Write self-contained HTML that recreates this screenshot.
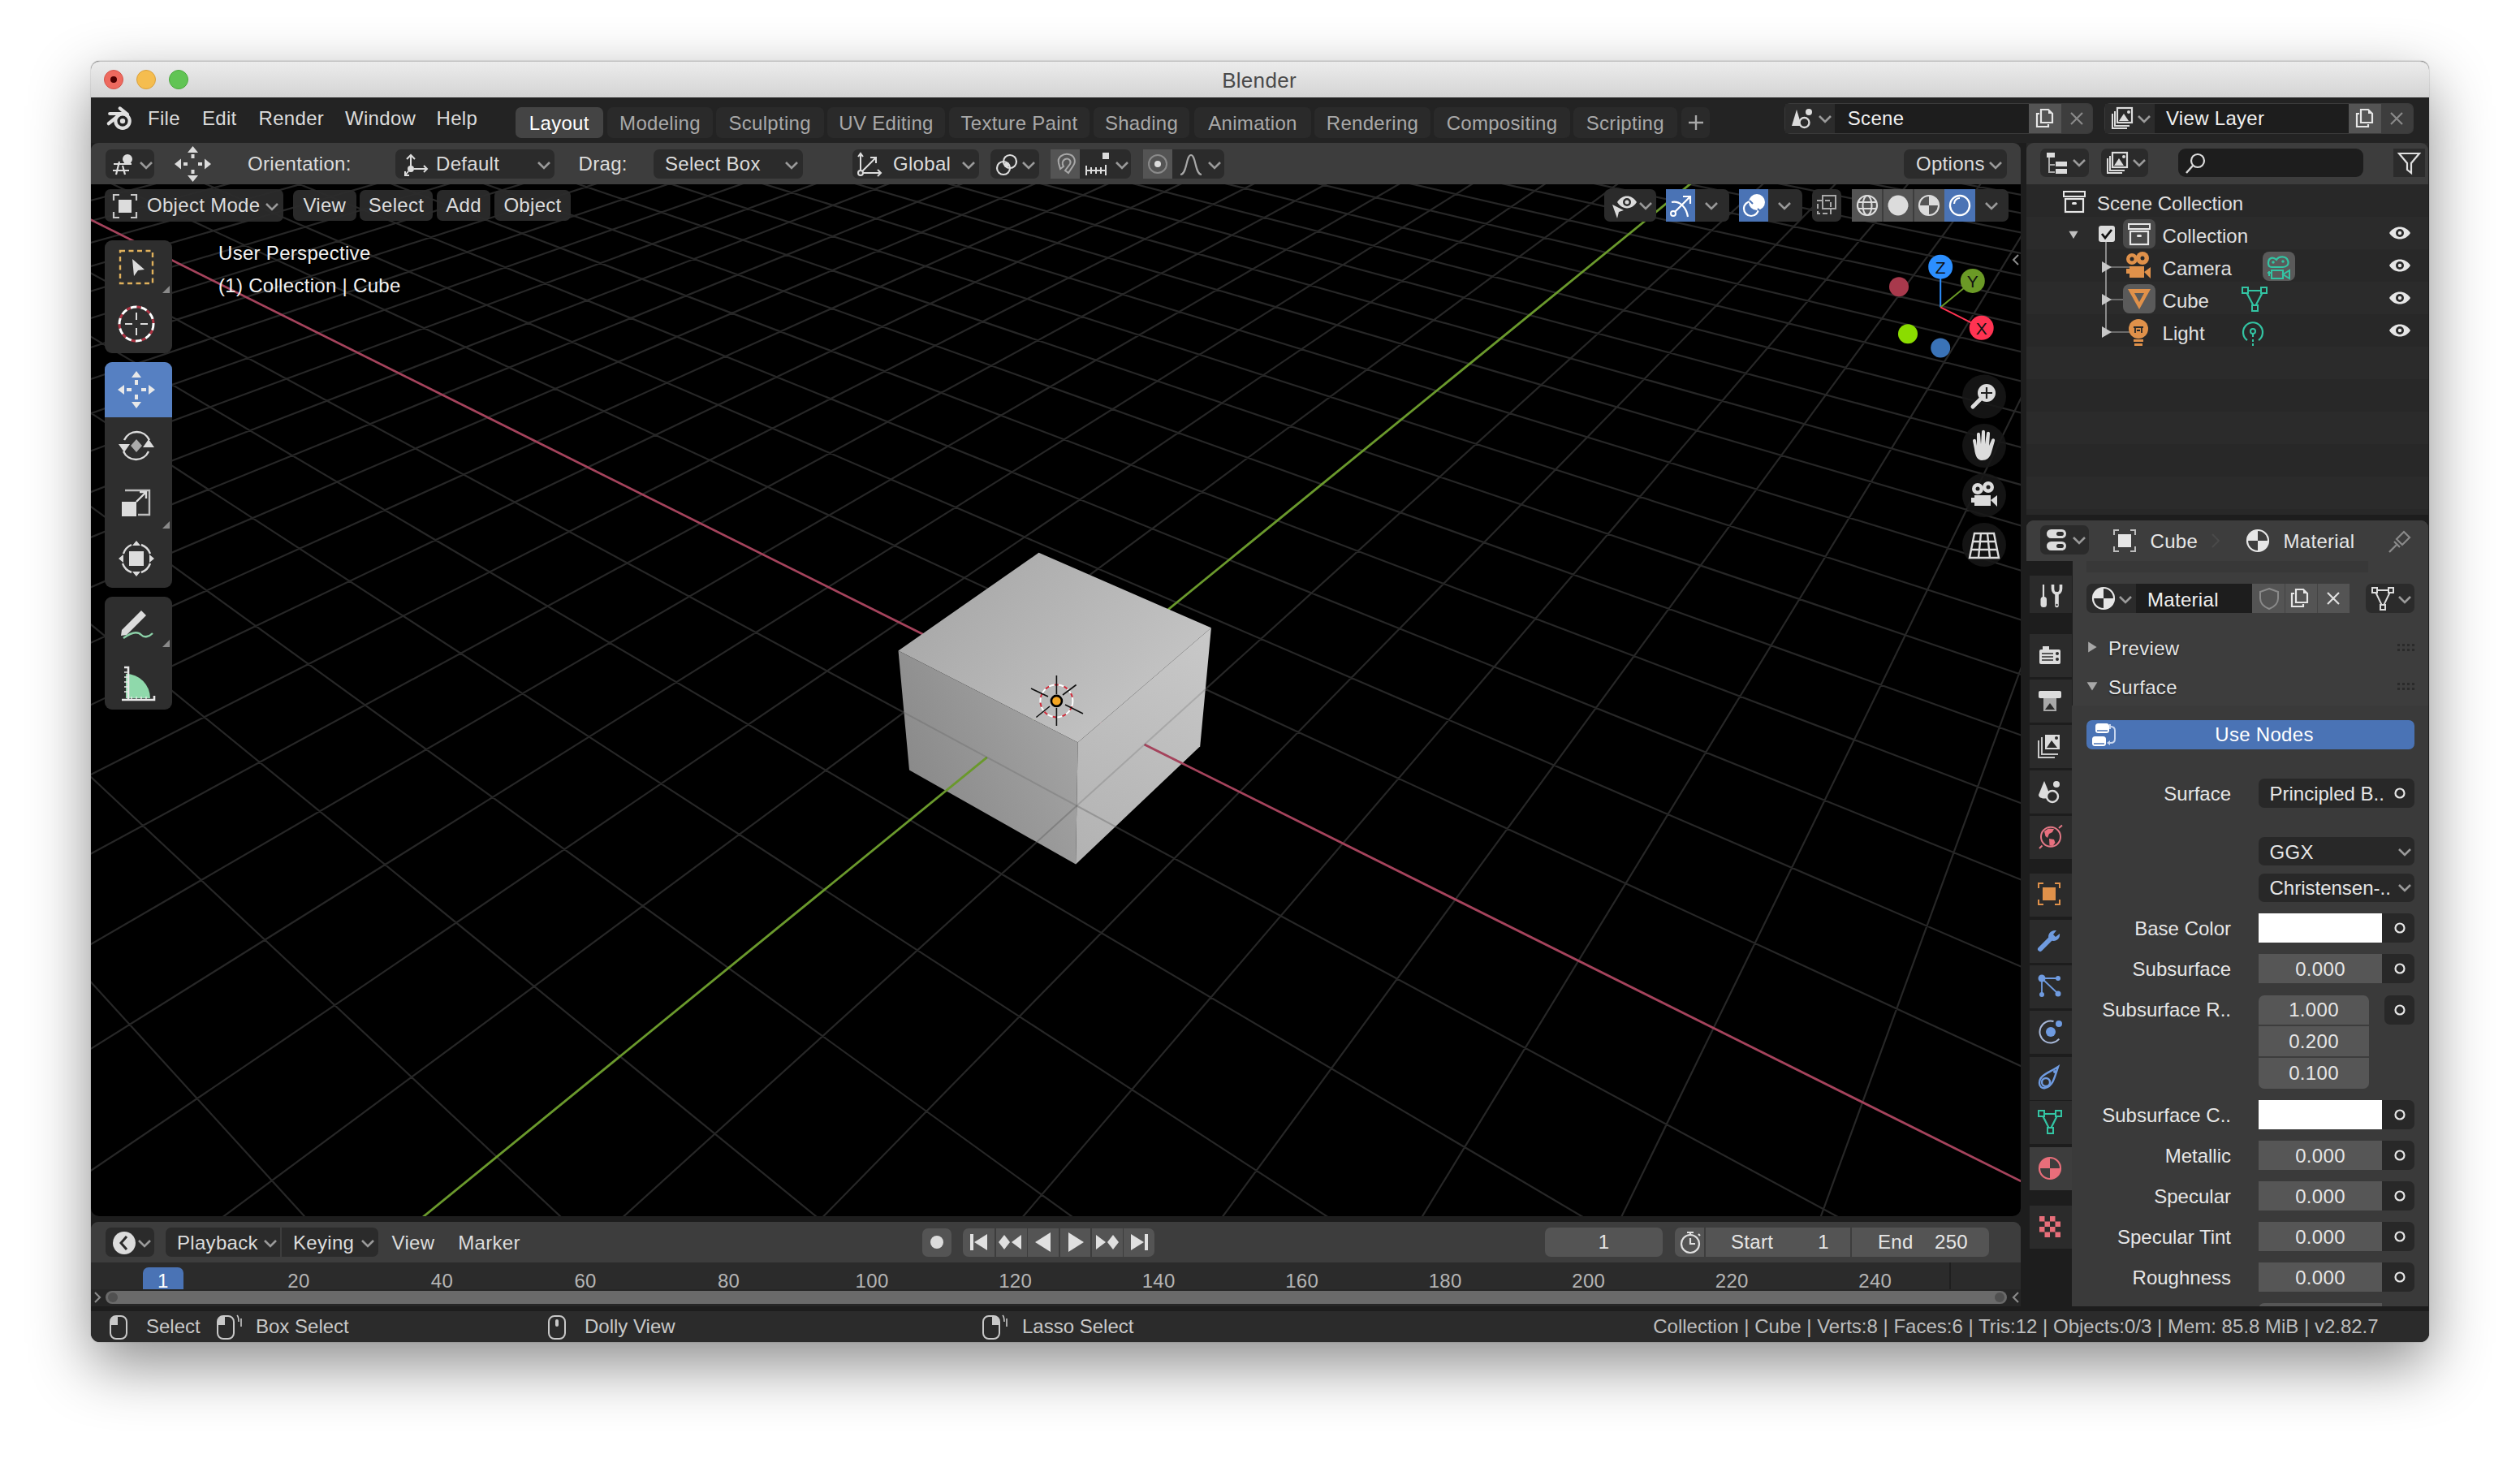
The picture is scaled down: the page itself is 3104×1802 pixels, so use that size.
<!DOCTYPE html><html><head><meta charset="utf-8"><style>
html,body{margin:0;padding:0;width:3104px;height:1802px;overflow:hidden;background:#ffffff;font-family:"Liberation Sans", sans-serif;}
div{box-sizing:border-box;}
.t{position:absolute;white-space:nowrap;letter-spacing:0.3px;}
svg{overflow:visible;}
</style></head><body>
<div style="position:absolute;left:112px;top:75px;width:2880px;height:1578px;border-radius:11px;box-shadow:0 28px 75px rgba(0,0,0,0.45), 0 0 1.5px rgba(0,0,0,0.4);background:#1d1d1d;"></div>
<div style="position:absolute;left:112px;top:75px;width:2880px;height:45px;border-radius:11px 11px 0 0;background:linear-gradient(#ececec,#d4d4d4);border-top:1px solid #bdbdbd;"></div>
<div class="t" style="left:1151.0px;width:800px;text-align:center;top:85.8px;font-size:26px;line-height:26px;color:#4a4a4a;">Blender</div>
<div style="position:absolute;left:128px;top:86px;width:24px;height:24px;border-radius:12px;background:#ee6a5f;border:1px solid #d5544a;"></div>
<div style="position:absolute;left:168px;top:86px;width:24px;height:24px;border-radius:12px;background:#f5bd4f;border:1px solid #d9a03c;"></div>
<div style="position:absolute;left:208px;top:86px;width:24px;height:24px;border-radius:12px;background:#61c454;border:1px solid #4ca93f;"></div>
<div style="position:absolute;left:136px;top:94px;width:8px;height:8px;border-radius:4px;background:#4d0000;"></div>
<div style="position:absolute;left:112.0px;top:120.0px;width:2880.0px;height:56.0px;background:#232323;"></div>
<svg style="position:absolute;left:130px;top:130px;" width="34" height="32" viewBox="0 0 34 32"><g stroke="#e0e0e0" stroke-width="4.2" stroke-linecap="round" fill="none">
<path d="M17.7 3.4L27 11"/><path d="M5.2 10H20"/><path d="M3.8 22.2L14 14"/></g>
<circle cx="21" cy="19.1" r="8.7" stroke="#e0e0e0" stroke-width="4.2" fill="#232323"/><circle cx="21" cy="19.1" r="3.2" fill="#e0e0e0"/></svg>
<div class="t" style="left:182.0px;top:134.4px;font-size:24px;line-height:24px;color:#dcdcdc;">File</div>
<div class="t" style="left:249.0px;top:134.4px;font-size:24px;line-height:24px;color:#dcdcdc;">Edit</div>
<div class="t" style="left:318.6px;top:134.4px;font-size:24px;line-height:24px;color:#dcdcdc;">Render</div>
<div class="t" style="left:425.0px;top:134.4px;font-size:24px;line-height:24px;color:#dcdcdc;">Window</div>
<div class="t" style="left:537.6px;top:134.4px;font-size:24px;line-height:24px;color:#dcdcdc;">Help</div>
<div style="position:absolute;left:634.5px;top:132.0px;width:108.5px;height:38.0px;background:#444444;border-radius:7px;"></div>
<div class="t" style="left:288.8px;width:800px;text-align:center;top:139.9px;font-size:24px;line-height:24px;color:#ffffff;">Layout</div>
<div style="position:absolute;left:748.0px;top:132.0px;width:130.0px;height:38.0px;background:#2a2a2a;border-radius:7px;"></div>
<div class="t" style="left:413.0px;width:800px;text-align:center;top:139.9px;font-size:24px;line-height:24px;color:#a8a8a8;">Modeling</div>
<div style="position:absolute;left:882.0px;top:132.0px;width:132.5px;height:38.0px;background:#2a2a2a;border-radius:7px;"></div>
<div class="t" style="left:548.2px;width:800px;text-align:center;top:139.9px;font-size:24px;line-height:24px;color:#a8a8a8;">Sculpting</div>
<div style="position:absolute;left:1018.6px;top:132.0px;width:145.9px;height:38.0px;background:#2a2a2a;border-radius:7px;"></div>
<div class="t" style="left:691.5px;width:800px;text-align:center;top:139.9px;font-size:24px;line-height:24px;color:#a8a8a8;">UV Editing</div>
<div style="position:absolute;left:1169.0px;top:132.0px;width:173.0px;height:38.0px;background:#2a2a2a;border-radius:7px;"></div>
<div class="t" style="left:855.5px;width:800px;text-align:center;top:139.9px;font-size:24px;line-height:24px;color:#a8a8a8;">Texture Paint</div>
<div style="position:absolute;left:1347.0px;top:132.0px;width:118.0px;height:38.0px;background:#2a2a2a;border-radius:7px;"></div>
<div class="t" style="left:1006.0px;width:800px;text-align:center;top:139.9px;font-size:24px;line-height:24px;color:#a8a8a8;">Shading</div>
<div style="position:absolute;left:1471.0px;top:132.0px;width:144.0px;height:38.0px;background:#2a2a2a;border-radius:7px;"></div>
<div class="t" style="left:1143.0px;width:800px;text-align:center;top:139.9px;font-size:24px;line-height:24px;color:#a8a8a8;">Animation</div>
<div style="position:absolute;left:1619.0px;top:132.0px;width:143.0px;height:38.0px;background:#2a2a2a;border-radius:7px;"></div>
<div class="t" style="left:1290.5px;width:800px;text-align:center;top:139.9px;font-size:24px;line-height:24px;color:#a8a8a8;">Rendering</div>
<div style="position:absolute;left:1766.0px;top:132.0px;width:168.0px;height:38.0px;background:#2a2a2a;border-radius:7px;"></div>
<div class="t" style="left:1450.0px;width:800px;text-align:center;top:139.9px;font-size:24px;line-height:24px;color:#a8a8a8;">Compositing</div>
<div style="position:absolute;left:1938.0px;top:132.0px;width:127.7px;height:38.0px;background:#2a2a2a;border-radius:7px;"></div>
<div class="t" style="left:1601.8px;width:800px;text-align:center;top:139.9px;font-size:24px;line-height:24px;color:#a8a8a8;">Scripting</div>
<div style="position:absolute;left:2071.0px;top:132.0px;width:35.0px;height:38.0px;background:#2a2a2a;border-radius:7px;"></div>
<svg style="position:absolute;left:2078px;top:140px;" width="22" height="22" viewBox="0 0 22 22"><path d="M11 2V20M2 11H20" stroke="#a8a8a8" stroke-width="2.4"/></svg>
<div style="position:absolute;left:2198.0px;top:127.0px;width:380.0px;height:38.0px;background:#3a3a3a;border-radius:7px;"></div>
<div style="position:absolute;left:2199.0px;top:128.0px;width:61.0px;height:36.0px;background:#2b2b2b;border-radius:7px 0 0 7pxpx;"></div>
<div style="position:absolute;left:2260.0px;top:128.0px;width:239.0px;height:36.0px;background:#1d1d1d;"></div>
<div style="position:absolute;left:2499.0px;top:128.0px;width:40.0px;height:36.0px;background:#545454;"></div>
<div style="position:absolute;left:2539.0px;top:128.0px;width:38.0px;height:36.0px;background:#3d3d3d;border-radius:0 7px 7px 0px;"></div>
<svg style="position:absolute;left:2205px;top:131px;" width="30" height="30" viewBox="0 0 30 30"><path d="M8 4 L14 24 L2 24 Z" fill="#dcdcdc"/><circle cx="23" cy="7" r="4" fill="#dcdcdc"/><circle cx="17.5" cy="20" r="6" fill="#2b2b2b" stroke="#dcdcdc" stroke-width="2.4"/></svg>
<svg style="position:absolute;left:2239px;top:137px;" width="18" height="18" viewBox="0 0 18 18"><path d="M2 6L9 13L16 6" stroke="#9a9a9a" stroke-width="2.6" fill="none"/></svg>
<div class="t" style="left:2275.8px;top:134.4px;font-size:24px;line-height:24px;color:#f0f0f0;">Scene</div>
<svg style="position:absolute;left:2505px;top:131px;" width="30" height="30" viewBox="0 0 30 30"><path d="M7 9H4V25H18V22" stroke="#e6e6e6" stroke-width="2.2" fill="none"/><path d="M9 4H18L23 9V20H9Z" stroke="#e6e6e6" stroke-width="2.2" fill="none"/><path d="M18 4V9H23" fill="#e6e6e6"/></svg>
<svg style="position:absolute;left:2548px;top:136px;" width="20" height="20" viewBox="0 0 20 20"><path d="M3 3L17 17M17 3L3 17" stroke="#8a8a8a" stroke-width="2.2"/></svg>
<div style="position:absolute;left:2591.7px;top:127.0px;width:380.9px;height:38.0px;background:#3a3a3a;border-radius:7px;"></div>
<div style="position:absolute;left:2592.7px;top:128.0px;width:61.3px;height:36.0px;background:#2b2b2b;border-radius:7px 0 0 7pxpx;"></div>
<div style="position:absolute;left:2654.0px;top:128.0px;width:239.0px;height:36.0px;background:#1d1d1d;"></div>
<div style="position:absolute;left:2893.0px;top:128.0px;width:40.0px;height:36.0px;background:#545454;"></div>
<div style="position:absolute;left:2933.0px;top:128.0px;width:38.6px;height:36.0px;background:#3d3d3d;border-radius:0 7px 7px 0px;"></div>
<svg style="position:absolute;left:2600px;top:131px;" width="30" height="30" viewBox="0 0 30 30"><path d="M2 9V27H20" stroke="#dcdcdc" stroke-width="2" fill="none"/><path d="M5 6V24H23" stroke="#dcdcdc" stroke-width="2" fill="none"/><rect x="8" y="2" width="18" height="18" stroke="#dcdcdc" stroke-width="2.2" fill="none"/><path d="M10 18L16 9L22 18Z" fill="#dcdcdc"/><circle cx="22" cy="7" r="2" fill="#dcdcdc"/></svg>
<svg style="position:absolute;left:2632px;top:137px;" width="18" height="18" viewBox="0 0 18 18"><path d="M2 6L9 13L16 6" stroke="#9a9a9a" stroke-width="2.6" fill="none"/></svg>
<div class="t" style="left:2668.0px;top:134.4px;font-size:24px;line-height:24px;color:#f0f0f0;">View Layer</div>
<svg style="position:absolute;left:2899px;top:131px;" width="30" height="30" viewBox="0 0 30 30"><path d="M7 9H4V25H18V22" stroke="#e6e6e6" stroke-width="2.2" fill="none"/><path d="M9 4H18L23 9V20H9Z" stroke="#e6e6e6" stroke-width="2.2" fill="none"/><path d="M18 4V9H23" fill="#e6e6e6"/></svg>
<svg style="position:absolute;left:2942px;top:136px;" width="20" height="20" viewBox="0 0 20 20"><path d="M3 3L17 17M17 3L3 17" stroke="#8a8a8a" stroke-width="2.2"/></svg>
<div style="position:absolute;left:112px;top:176px;width:2377px;height:51px;background:#3d3d3d;border-radius:9px 9px 0 0;"></div>
<div style="position:absolute;left:130.0px;top:184.0px;width:60.0px;height:36.0px;background:#2b2b2b;border-radius:7px;"></div>
<svg style="position:absolute;left:137px;top:188px;" width="34" height="30" viewBox="0 0 34 30"><circle cx="20" cy="8" r="6" fill="#dcdcdc"/><path d="M3 14H25M6 27L10 11M17 27L14 16M2 22H22" stroke="#dcdcdc" stroke-width="2.2"/></svg>
<svg style="position:absolute;left:171px;top:194px;" width="18" height="18" viewBox="0 0 18 18"><path d="M2 6L9 13L16 6" stroke="#9a9a9a" stroke-width="2.6" fill="none"/></svg>
<svg style="position:absolute;left:214px;top:179px;" width="47" height="46" viewBox="0 0 47 46"><g fill="#dcdcdc"><path d="M23.5 1L30 9H17Z"/><path d="M23.5 45L30 37H17Z"/><path d="M1 23L9 16.5V29.5Z"/><path d="M46 23L38 16.5V29.5Z"/><rect x="21.5" y="11" width="4" height="5"/><rect x="21.5" y="30" width="4" height="5"/><rect x="12" y="21" width="5" height="4"/><rect x="30" y="21" width="5" height="4"/></g></svg>
<div class="t" style="left:305.0px;top:190.4px;font-size:24px;line-height:24px;color:#dcdcdc;">Orientation:</div>
<div style="position:absolute;left:487.0px;top:184.0px;width:196.0px;height:36.0px;background:#2b2b2b;border-radius:7px;"></div>
<svg style="position:absolute;left:497px;top:188px;" width="32" height="30" viewBox="0 0 32 30"><path d="M9 20V3M4 8L9 3L14 8" stroke="#dcdcdc" stroke-width="2" fill="none"/><circle cx="9" cy="20" r="4" fill="#dcdcdc"/><path d="M13 20H29M25 16L29 20L25 24" stroke="#dcdcdc" stroke-width="2" fill="none"/><path d="M6 23L2 28M2 23V28H7" stroke="#dcdcdc" stroke-width="2" fill="none"/></svg>
<div class="t" style="left:537.0px;top:190.4px;font-size:24px;line-height:24px;color:#dcdcdc;">Default</div>
<svg style="position:absolute;left:661px;top:194px;" width="18" height="18" viewBox="0 0 18 18"><path d="M2 6L9 13L16 6" stroke="#9a9a9a" stroke-width="2.6" fill="none"/></svg>
<div class="t" style="left:712.6px;top:190.4px;font-size:24px;line-height:24px;color:#dcdcdc;">Drag:</div>
<div style="position:absolute;left:805.0px;top:184.0px;width:184.0px;height:36.0px;background:#2b2b2b;border-radius:7px;"></div>
<div class="t" style="left:819.0px;top:190.4px;font-size:24px;line-height:24px;color:#dcdcdc;">Select Box</div>
<svg style="position:absolute;left:966px;top:194px;" width="18" height="18" viewBox="0 0 18 18"><path d="M2 6L9 13L16 6" stroke="#9a9a9a" stroke-width="2.6" fill="none"/></svg>
<div style="position:absolute;left:1050.0px;top:184.0px;width:155.5px;height:36.0px;background:#2b2b2b;border-radius:7px;"></div>
<svg style="position:absolute;left:1056px;top:187px;" width="32" height="32" viewBox="0 0 32 32"><path d="M4 26L23 7M16 7H23V14" stroke="#dcdcdc" stroke-width="2" fill="none"/><path d="M4 2V26H29M25 22L29 26L25 30M1 6L4 2L7 6" stroke="#dcdcdc" stroke-width="2" fill="none"/><circle cx="4" cy="26" r="3" fill="#3d3d3d" stroke="#dcdcdc" stroke-width="2"/></svg>
<div class="t" style="left:1100.0px;top:190.4px;font-size:24px;line-height:24px;color:#dcdcdc;">Global</div>
<svg style="position:absolute;left:1184px;top:194px;" width="18" height="18" viewBox="0 0 18 18"><path d="M2 6L9 13L16 6" stroke="#9a9a9a" stroke-width="2.6" fill="none"/></svg>
<div style="position:absolute;left:1220.0px;top:184.0px;width:59.5px;height:36.0px;background:#2b2b2b;border-radius:7px;"></div>
<svg style="position:absolute;left:1226px;top:188px;" width="30" height="30" viewBox="0 0 30 30"><circle cx="10" cy="19" r="8" stroke="#dcdcdc" stroke-width="2.2" fill="none"/><circle cx="18" cy="11" r="8" stroke="#dcdcdc" stroke-width="2.2" fill="none"/><circle cx="14" cy="15" r="3" fill="#dcdcdc"/></svg>
<svg style="position:absolute;left:1258px;top:194px;" width="18" height="18" viewBox="0 0 18 18"><path d="M2 6L9 13L16 6" stroke="#9a9a9a" stroke-width="2.6" fill="none"/></svg>
<div style="position:absolute;left:1294.0px;top:184.0px;width:99.0px;height:36.0px;background:#2b2b2b;border-radius:7px;"></div>
<div style="position:absolute;left:1294.0px;top:184.0px;width:36.0px;height:36.0px;background:#545454;border-radius:7px 0 0 7pxpx;"></div>
<svg style="position:absolute;left:1298px;top:186px;" width="30" height="32" viewBox="0 0 30 32"><path d="M6 15 C4 7 12 3 18 4 C25 5 28 12 24 18 L18 27 L14 24 L20 16 C22 12 18 8 14 10 C10 12 10 16 12 19 L8 22 Z" stroke="#a8a8a8" stroke-width="2" fill="none"/></svg>
<svg style="position:absolute;left:1336px;top:187px;" width="40" height="30" viewBox="0 0 40 30"><rect x="22" y="1" width="8" height="8" fill="#dcdcdc"/><path d="M2 17V29M2 23H26M8 19V27M14 19V27M20 19V27M26 16V29" stroke="#dcdcdc" stroke-width="2"/></svg>
<svg style="position:absolute;left:1373px;top:194px;" width="18" height="18" viewBox="0 0 18 18"><path d="M2 6L9 13L16 6" stroke="#9a9a9a" stroke-width="2.6" fill="none"/></svg>
<div style="position:absolute;left:1407.6px;top:184.0px;width:100.0px;height:36.0px;background:#2b2b2b;border-radius:7px;"></div>
<div style="position:absolute;left:1407.6px;top:184.0px;width:36.4px;height:36.0px;background:#545454;border-radius:7px 0 0 7pxpx;"></div>
<svg style="position:absolute;left:1412px;top:188px;" width="28" height="28" viewBox="0 0 28 28"><circle cx="14" cy="14" r="11" stroke="#8a8a8a" stroke-width="2" fill="none"/><circle cx="14" cy="14" r="4" fill="#dcdcdc"/></svg>
<svg style="position:absolute;left:1452px;top:187px;" width="32" height="32" viewBox="0 0 32 32"><path d="M2 28 C10 28 9 4 15 4 C21 4 20 28 28 28" stroke="#a8a8a8" stroke-width="2.2" fill="none"/></svg>
<svg style="position:absolute;left:1487px;top:194px;" width="18" height="18" viewBox="0 0 18 18"><path d="M2 6L9 13L16 6" stroke="#9a9a9a" stroke-width="2.6" fill="none"/></svg>
<div style="position:absolute;left:2345.0px;top:184.0px;width:126.7px;height:36.0px;background:#2b2b2b;border-radius:7px;"></div>
<div class="t" style="left:2360.0px;top:190.4px;font-size:24px;line-height:24px;color:#dcdcdc;">Options</div>
<svg style="position:absolute;left:2449px;top:194px;" width="18" height="18" viewBox="0 0 18 18"><path d="M2 6L9 13L16 6" stroke="#9a9a9a" stroke-width="2.6" fill="none"/></svg>
<div style="position:absolute;left:112px;top:227px;width:2377px;height:1271px;border-radius:0 0 10px 10px;overflow:hidden;background:#000;">
<svg style="position:absolute;left:0;top:0" width="2377" height="1271" viewBox="0 0 2377 1271"><path d="M-272314807071.6 16411146888.6L947.1 -610.7 M-270219690554.6 16416358115.0L955.5 -610.3 M-268124574037.7 16421569341.3L963.9 -609.9 M-266029457520.7 16426780567.6L972.4 -609.5 M-263934341003.7 16431991793.9L981.0 -609.0 M-261839224486.7 16437203020.3L989.6 -608.6 M-259744107969.8 16442414246.6L998.3 -608.2 M-257648991452.8 16447625472.9L1007.0 -607.7 M-539985.6 31988.8L-270093668129.7 16416671816.0 M-255553876751.6 16452836816.2L1015.8 -607.3 M-242384.5 14053.7L-267398332556.1 16423375736.6 M-253458756617.9 16458047808.6L1024.6 -606.8 M-155543.7 8820.2L-264702998939.9 16430079773.9 M-251363643687.9 16463259268.9L1033.5 -606.4 M-114120.8 6323.9L-262007670947.0 16436784161.4 M-249268527156.0 16468470495.2L1042.5 -605.9 M-89871.4 4862.5L-259312342877.5 16443488549.0 M-247173408867.9 16473681604.5L1051.6 -605.5 M-73949.3 3902.9L-256617005614.5 16450192352.5 M-245078292350.9 16478892830.9L1060.7 -605.0 M-62693.6 3224.6L-253921673879.2 16456896506.4 M-242983175833.9 16484104057.2L1069.8 -604.6 M-54315.1 2719.7L-251226345713.9 16463600894.4 M-240888061028.6 16489315400.7L1079.0 -604.1 M-47835.6 2329.2L-248531013940.2 16470305048.4 M-238792942800.0 16494526509.8L1088.3 -603.6 M-42675.3 2018.2L-245835680419.8 16477009085.4 M-236697826283.0 16499737736.2L1097.7 -603.2 M-38468.4 1764.7L-243140350392.9 16483713356.5 M-234602711433.0 16504949079.8L1107.1 -602.7 M-34973.1 1554.0L-240445018619.2 16490417510.6 M-232507593249.1 16510160188.8L1116.6 -602.2 M-32022.9 1376.2L-237749685156.2 16497121547.4 M-230412476732.1 16515371415.1L1126.2 -601.7 M-29499.5 1224.1L-235054351731.5 16503825584.2 M-228317360215.1 16520582641.5L1135.8 -601.3 M-27316.6 1092.6L-232359019996.1 16510529738.1 M-226222245305.5 16525793985.2L1145.5 -600.8 M-25409.6 977.7L-229663693156.3 16517234244.2 M-224127127181.2 16531005094.1L1155.3 -600.3 M-23729.3 876.4L-226968359750.7 16523938280.9 M-222032010664.2 16536216320.4L1165.1 -599.8 M-22237.5 786.5L-224273024789.9 16530642200.0 M-219936894147.2 16541427546.8L1175.0 -599.3 M-20904.2 706.1L-221577696203.3 16537346589.0 M-217841777630.2 16546638773.1L1185.0 -598.8 M-19705.5 633.9L-218882362874.4 16544050625.5 M-215746661113.2 16551849999.4L1195.0 -598.3 M-18621.8 568.6L-216187031119.9 16550754779.5 M-213651544596.3 16557061225.7L1205.2 -597.8 M-17637.5 509.3L-213491700882.3 16557459051.1 M-211556429582.5 16562272569.8L1215.4 -597.3 M-16739.4 455.1L-210796370606.4 16564163322.9 M-209461311562.3 16567483678.4L1225.6 -596.7 M-15916.7 405.6L-208101035856.3 16570867241.5 M-207366195045.3 16572694904.7L1236.0 -596.2 M-15160.3 360.0L-205405702642.2 16577571277.7 M-205271077069.8 16577906013.3L1246.4 -595.7 M-14462.5 317.9L-202710372347.2 16584275549.5 M-203175962011.4 16583117357.4L1256.9 -595.2 M-13816.7 279.0L-200015040592.6 16590979703.5 M-201080845494.4 16588328583.7L1267.5 -594.6 M-13217.4 242.9L-197319710240.1 16597683975.5 M-198985728977.4 16593539810.0L1278.2 -594.1 M-12659.6 209.3L-194624377083.6 16604388011.5 M-196890612460.5 16598751036.3L1288.9 -593.6 M-12139.2 177.9L-191929045329.0 16611092165.6 M-194795495943.5 16603962262.7L1299.7 -593.0 M-11652.6 148.6L-189233713574.5 16617796319.6 M-192700379426.5 16609173489.0L1310.7 -592.5 M-11196.5 121.1L-186538383145.4 16624500591.7 M-190605262909.5 16614384715.3L1321.7 -591.9 M-10768.3 95.3L-183843051371.7 16631204745.7 M-188510147732.0 16619596059.7L1332.7 -591.4 M-10365.4 71.0L-181147718310.9 16637908781.6 M-186415029875.6 16624807168.0L1343.9 -590.8 M-9985.6 48.1L-178452387824.3 16644613053.9 M-184319913358.6 16630018394.3L1355.1 -590.2 M-9627.0 26.5L-175757053553.0 16651316971.3 M-182224796841.6 16635229620.6L1366.5 -589.7 M-9287.9 6.1L-173061723047.3 16658021243.6 M-180129681604.5 16640440965.2L1377.9 -589.1 M-8966.7 -13.3L-170366392503.3 16664725516.0 M-178034563807.7 16645652073.3L1389.4 -588.5 M-8662.1 -31.6L-167671058346.8 16671429433.2 M-175939447290.7 16650863299.6L1401.0 -587.9 M-8372.8 -49.1L-164975727783.7 16678133705.6 M-173844330773.7 16656074525.9L1412.7 -587.3 M-8097.6 -65.7L-162280396605.7 16684837918.9 M-171749215477.1 16661285870.6L1424.5 -586.8 M-7835.6 -81.4L-159585065408.5 16691542132.2 M-169654096534.3 16666496860.1L1436.4 -586.2 M-7585.8 -96.5L-156889732520.0 16698246167.7 M-167558981222.8 16671708204.9L1448.4 -585.6 M-7347.5 -110.9L-154194400217.7 16704950262.3 M-165463864705.8 16676919431.2L1460.4 -584.9 M-7119.8 -124.6L-151499069011.0 16711654475.7 M-163368748188.8 16682130657.5L1472.6 -584.3 M-6902.0 -137.7L-148803738313.7 16718358748.5 M-161273632244.8 16687341943.2L1484.9 -583.7 M-6693.5 -150.3L-146108404982.8 16725062724.3 M-159178515154.9 16692553110.2L1497.2 -583.1 M-6493.7 -162.3L-143413073747.4 16731766937.7 M-157083398637.9 16697764336.5L1509.7 -582.5 M-6302.1 -173.9L-140717742992.7 16738471210.6 M-154988282120.9 16702975562.8L1522.3 -581.8 M-6118.2 -184.9L-138022409747.9 16745175186.2 M-152893166690.3 16708186907.9L1535.0 -581.2 M-5941.6 -195.6L-135327078483.7 16751879399.7 M-150798048015.5 16713397896.7L1547.7 -580.6 M-5771.7 -205.8L-132631747671.6 16758583672.8 M-148702932041.7 16718609182.4L1560.6 -579.9 M-5608.3 -215.7L-129936416359.6 16765287886.4 M-146607816573.9 16723820527.6L1573.6 -579.3 M-5451.0 -225.2L-127241083220.1 16771991861.7 M-144512700049.5 16729031753.9L1586.7 -578.6 M-5299.4 -234.3L-124545752350.6 16778696135.0 M-142417583525.0 16734242980.2L1599.9 -577.9 M-5153.2 -243.1L-121850419278.2 16785400110.1 M-140322466003.6 16739454087.7L1613.2 -577.3 M-5012.2 -251.6L-119155087109.9 16792104204.4 M-138227349985.1 16744665373.4L1626.7 -576.6 M-4876.1 -259.8L-116459756202.0 16798808477.8 M-136132234435.4 16749876718.8L1640.2 -575.9 M-4744.5 -267.7L-113764424851.6 16805512691.5 M-134037117903.6 16755087945.1L1653.9 -575.2 M-4617.4 -275.4L-111069091903.7 16812216666.3 M-131942000434.2 16760299052.4L1667.6 -574.5 M-4494.5 -282.8L-108373760938.4 16818920939.8 M-129846884839.8 16765510397.9L1681.5 -573.8 M-4375.5 -290.0L-105678429559.3 16825625153.6 M-127751768308.0 16770721624.2L1695.6 -573.1 M-4260.3 -296.9L-102983098161.0 16832329367.4 M-125656652222.5 16775932910.2L1709.7 -572.4 M-4148.8 -303.6L-100287766743.6 16839033581.3 M-123561535683.2 16781144136.6L1724.0 -571.7 M-4040.7 -310.1L-97592434266.9 16845737615.7 M-121466418280.8 16786355243.7L1738.3 -571.0 M-3935.8 -316.5L-94897101491.4 16852441590.1 M-119371302604.6 16791566589.3L1752.9 -570.3 M-3834.1 -322.6L-92201770083.6 16859145803.9 M-117276185232.0 16796777696.4L1767.5 -569.5 M-3735.4 -328.5L-89506438656.6 16865850017.8 M-115181069116.8 16801988982.4L1782.3 -568.8 M-3639.6 -334.3L-86811106131.0 16872554022.0 M-113085953388.5 16807200328.2L1797.2 -568.0 M-3546.5 -339.9L-84115775894.6 16879258475.8 M-110990835264.4 16812411315.7L1812.2 -567.3 M-3456.0 -345.4L-81420443393.0 16885962479.9 M-108895718747.5 16817622542.0L1827.4 -566.5 M-3368.1 -350.7L-78725111918.2 16892666693.9 M-106800602989.3 16822833887.9L1842.7 -565.7 M-3282.6 -355.8L-76029779208.7 16899370637.8 M-104705486085.5 16828045054.4L1858.1 -565.0 M-3199.4 -360.8L-73334447868.9 16906074881.8 M-102610369561.1 16833256280.8L1873.7 -564.2 M-3118.4 -365.7L-70639116374.9 16912779095.9 M-100515253750.9 16838467626.8L1889.4 -563.4 M-3039.5 -370.5L-67943784982.4 16919483340.1 M-98420135812.9 16843678613.8L1905.3 -562.6 M-2962.7 -375.1L-65248452634.0 16926187343.8 M-96325019645.6 16848889899.9L1921.3 -561.8 M-2887.9 -379.6L-62553121111.2 16932891557.9 M-94229902793.8 16854101066.4L1937.5 -561.0 M-2815.0 -384.0L-59857789463.0 16939595742.0 M-92134787266.3 16859312472.4L1953.8 -560.2 M-2743.9 -388.3L-57162457196.0 16946299745.5 M-90039671054.3 16864523758.7L1970.3 -559.3 M-2674.5 -392.5L-54467125702.5 16953003974.8 M-87944554202.6 16869734925.1L1986.9 -558.5 M-2606.9 -396.6L-51771793495.3 16959707978.1 M-85849437365.7 16874946091.5L2003.7 -557.7 M-2540.9 -400.5L-49076462643.7 16966412433.4 M-83754320990.1 16880157347.9L2020.6 -556.8 M-2476.5 -404.4L-46381130460.4 16973116436.7 M-81659204171.8 16885368514.2L2037.7 -556.0 M-2413.5 -408.2L-43685798907.1 16979820666.1 M-79564088640.5 16890579950.6L2055.0 -555.1 M-2352.1 -411.9L-40990467184.2 16986524835.2 M-77468971818.5 16895791116.9L2072.4 -554.2 M-2292.1 -415.5L-38295135592.5 16993229064.7 M-75373855547.0 16901002403.4L2090.0 -553.3 M-2233.4 -419.1L-35599803502.6 16999933067.8 M-73278738609.7 16906213539.7L2107.8 -552.4 M-2176.1 -422.5L-32904471899.0 17006637297.3 M-71183621821.2 16911424706.0L2125.7 -551.5 M-2120.0 -425.9L-30209140271.4 17013341526.9 M-69088505538.5 16916635992.4L2143.8 -550.6 M-2065.2 -429.2L-27513808198.4 17020045495.8 M-66993389122.0 16921847248.9L2162.1 -549.7 M-2011.5 -432.4L-24818476567.0 17026749727.3 M-64898272352.1 16927058415.1L2180.6 -548.8 M-1959.0 -435.6L-22123144611.4 17033453728.1 M-62803155597.1 16932269581.3L2199.3 -547.8 M-1907.7 -438.7L-19427813062.4 17040158042.9 M-60708038749.2 16937480717.4L2218.1 -546.9 M-1857.4 -441.7L-16732481267.4 17046862159.0 M-58612922444.1 16942692003.9L2237.2 -545.9 M-1808.1 -444.7L-14037149579.4 17053566390.6 M-56517806023.8 16947903260.3L2256.4 -545.0 M-1759.9 -447.6L-11341817770.0 17060270476.5 M-54422689306.1 16953114426.4L2275.8 -544.0 M-1712.7 -450.4L-8646486055.1 17066974706.3 M-52327573486.2 16958325878.7L2295.5 -543.0 M-1666.4 -453.2L-5951154276.5 17073678822.4 M-50232456718.3 16963537029.8L2315.3 -542.0 M-1621.1 -456.0L-3255822525.9 17080383021.9 M-48137340011.7 16968748195.8L2335.3 -541.0 M-1576.6 -458.6L-560490757.9 17087087130.4 M-46042223606.2 16973959467.4L2355.6 -540.0 M-1533.1 -461.3L2134840997.6 17093791254.1 M-43947106877.3 16979170618.4L2376.0 -539.0 M-1490.3 -463.8L4830172735.0 17100495347.4 M-41851990501.6 16984381905.1L2396.7 -537.9 M-1448.4 -466.4L7525504459.9 17107199455.8 M-39756874075.7 16989593176.7L2417.6 -536.9 M-1407.3 -468.8L10220836243.1 17113903685.7 M-37661757103.4 16994804206.9L2438.7 -535.8 M-1367.0 -471.3L12916168038.7 17120607900.5 M-35566640684.9 17000015478.5L2460.0 -534.7 M-1327.4 -473.7L15611499853.5 17127312115.4 M-33471524329.5 17005226787.9L2481.6 -533.7 M-1288.6 -476.0L18306831459.8 17134016117.3 M-31376407898.0 17010438067.1L2503.4 -532.6 M-1250.5 -478.3L21002163316.7 17140720362.6 M-29281291492.5 17015649369.0L2525.4 -531.5 M-1213.0 -480.6L23697494949.8 17147424425.2 M-27186174832.9 17020860523.6L2547.7 -530.3 M-1176.3 -482.8L26392826835.4 17154128670.6 M-25091058146.4 17026071647.9L2570.2 -529.2 M-1140.2 -484.9L29088158543.0 17160832794.2 M-22995941730.1 17031282953.7L2592.9 -528.1 M-1104.7 -487.1L31783490354.0 17167536978.7 M-18805708638.6 17041705383.7L2639.2 -525.7 M-1035.7 -491.2L37174153740.6 17180945225.7 M-16710592186.0 17046916689.6L2662.7 -524.6 M-1002.0 -493.3L39869485561.2 17187649410.2 M-14615475584.1 17052127844.0L2686.5 -523.4 M-969.0 -495.3L42564817240.1 17194353533.7 M-12520358977.7 17057338968.1L2710.6 -522.2 M-936.5 -497.2L45260149472.2 17201057871.0 M-10425242412.5 17062550118.7L2734.9 -520.9 M-904.5 -499.1L47955480739.6 17207761841.7 M-8330126002.9 17067761549.6L2759.5 -519.7 M-873.1 -501.0L50650812759.3 17214466087.4 M-6235009498.7 17072972859.4L2784.4 -518.4 M-842.2 -502.9L53346143954.8 17221170057.9 M-4139892898.6 17078183858.2L2809.6 -517.2 M-811.8 -504.7L56041476088.4 17227874334.3 M-2044776387.1 17083395130.1L2835.1 -515.9 M-781.9 -506.5L58736807842.9 17234578488.3 M50340135.7 17088606432.3L2860.9 -514.6 M-752.5 -508.3L61432139815.7 17241282703.5 M2145456640.9 17093817446.1L2886.9 -513.3 M-723.6 -510.1L64127471124.2 17247986735.0 M4240573233.3 17099029021.7L2913.3 -512.0 M-695.1 -511.8L66822803106.5 17254690950.3 M6335689753.8 17104240172.2L2940.0 -510.6 M-667.0 -513.5L69518135108.1 17261395165.6 M8430806330.5 17109451474.5L2967.1 -509.3 M-639.4 -515.1L72213466359.1 17268099197.0 M10525922916.5 17114662761.7L2994.4 -507.9 M-612.3 -516.8L74908798370.2 17274803412.3 M12621039304.4 17119873760.1L3022.1 -506.5 M-585.5 -518.4L77604130400.4 17281507627.7 M14716155911.0 17125085077.7L3050.1 -505.1 M-559.2 -520.0L80299461879.2 17288211720.3 M16811272480.2 17130296334.5L3078.5 -503.7 M-533.3 -521.5L82994793338.9 17294915812.9 M18906388956.0 17135507500.0L3107.2 -502.2 M-507.7 -523.1L85690125388.3 17301620028.3 M21001505528.9 17140718756.8L3136.2 -500.8 M-482.5 -524.6L88385456514.8 17308324059.4 M23096621986.2 17145929922.3L3165.7 -499.3 M-457.7 -526.1L91080788897.4 17315028336.4 M25191738428.5 17151141087.7L3195.5 -497.8 M-433.3 -527.5L93776119652.4 17321732305.7 M27286855001.4 17156352344.5L3225.7 -496.3 M-409.2 -529.0L96471451721.0 17328436521.2 M29381971425.2 17161563509.9L3256.2 -494.7 M-385.5 -530.4L99166784161.0 17335140798.4 M31477088113.6 17166774827.7L3287.2 -493.2 M-362.1 -531.8L101862115553.6 17341844890.8 M33572204705.1 17171986084.6L3318.5 -491.6 M-339.1 -533.2L104557446555.7 17348548921.5 M35667321430.8 17177197402.5L3350.3 -490.0 M-316.4 -534.6L107252779043.6 17355253198.7 M37762437508.0 17182408415.3L3382.5 -488.4 M-294.0 -535.9L109948111179.1 17361957414.4 M39857553745.5 17187619519.5L3415.1 -486.8 M-271.9 -537.3L112643442133.3 17368661445.0 M41952670847.5 17192830990.1L3448.1 -485.1 M-250.1 -538.6L115338774278.4 17375365660.7 M44047787852.5 17198042399.8L3481.6 -483.4 M-228.6 -539.9L118034105604.1 17382069752.9 M46142903426.8 17203253259.5L3515.5 -481.7 M-207.5 -541.2L120729437768.4 17388773968.7 M48238020197.1 17208464577.5L3549.9 -480.0 M-186.6 -542.4L123424769074.8 17395478060.8 M50333136542.7 17213675742.7L3584.8 -478.2 M-166.0 -543.7L126120101706.4 17402182338.5 M52428253618.5 17218887152.5L3620.1 -476.5 M-145.6 -544.9L128815432545.6 17408886368.8 M54523369770.4 17224098256.5L3656.0 -474.7 M-125.6 -546.1L131510765215.4 17415590646.5 M56618487099.4 17229309727.7L3692.3 -472.8 M-105.8 -547.3L134206096016.4 17422294676.7 M58713602819.2 17234520709.2L3729.1 -471.0 M-86.2 -548.5L136901427751.8 17428998830.6 M60808719775.7 17239732058.1L3766.5 -469.1 M-66.9 -549.6L139596760479.0 17435703108.5 M62903836315.0 17244943284.4L3804.3 -467.2 M-47.9 -550.8L142292091222.5 17442407138.6 M64998953085.3 17250154572.1L3842.8 -465.3 M-29.1 -551.9L144987422957.9 17449111292.5 M67094068916.9 17255365614.6L3881.7 -463.3 M-10.6 -553.0L147682755742.7 17455815570.5 M69189185687.2 17260576902.3L3921.3 -461.3 M7.7 -554.1L150378087497.2 17462519724.5 M71284302725.5 17265788251.3L3961.4 -459.3 M25.8 -555.2L153073418164.1 17469223754.4 M73379418229.5 17270999232.3L4002.1 -457.3 M43.6 -556.3L155768751006.3 17475928032.5 M75474536087.2 17276210765.5L4043.4 -455.2 M61.3 -557.4L158464081634.9 17482632062.3 M77569651539.0 17281421746.3L4085.4 -453.1 M78.7 -558.4L161159413370.2 17489336216.3 M79664768629.5 17286633095.5L4127.9 -451.0 M95.9 -559.4L163854746269.9 17496040494.6 M81759885459.3 17291844383.3L4171.1 -448.8 M112.8 -560.5L166550076841.0 17502744524.2 M83855001112.3 17297055425.3L4215.0 -446.6 M129.6 -561.5L169245409779.0 17509448802.6 M85950117331.3 17302266590.2L4259.5 -444.3 M146.2 -562.5L171940741533.5 17516152956.6 M88045234473.9 17307477939.5L4304.8 -442.1 M162.5 -563.5L174636072047.2 17522856986.1 M90140351646.3 17312689288.9L4350.7 -439.8 M178.7 -564.4L177331403782.6 17529561140.0 M92235468193.0 17317900515.3L4397.4 -437.4 M194.7 -565.4L180026736797.1 17536265418.6 M94330582058.7 17323111249.3L4444.8 -435.0 M210.5 -566.3L182722067253.3 17542969448.0 M96425702314.2 17328323152.8L4493.0 -432.6 M226.1 -567.3L185417398988.7 17549673601.9 M98520817483.3 17333534132.9L4541.9 -430.2 M241.5 -568.2L188112732060.7 17556377880.6 M100615934380.0 17338745420.9L4591.7 -427.7 M256.7 -569.1L190808062459.5 17563081909.8 M102711051291.7 17343956708.9L4642.2 -425.1 M271.8 -570.0L193503394194.9 17569786063.8 M104806166356.5 17349167688.8L4693.6 -422.5 M286.7 -570.9L196198727324.3 17576490342.7 M106901283640.5 17354379038.4L4745.9 -419.9 M301.4 -571.8L198894057665.6 17583194371.7 M108996400179.8 17359590264.8L4799.0 -417.2 M316.0 -572.7L201589389401.0 17589898525.7 M111091517113.8 17364801552.9L4853.1 -414.5 M330.4 -573.6L204284722587.9 17596602804.7 M113186632454.2 17370012594.2L4908.0 -411.8 M344.6 -574.4L206980052871.8 17603306833.6 M115281749388.1 17375223882.2L4964.0 -409.0 M358.7 -575.3L209675384607.2 17610010987.6 M117376866337.0 17380435170.3L5020.8 -406.1 M372.6 -576.1L212370717851.5 17616715266.7 M119471981178.5 17385646149.7L5078.7 -403.2 M386.3 -576.9L215066048078.0 17623419295.5 M121567098983.7 17390857561.3L5137.6 -400.2 M399.9 -577.8L217761379813.3 17630123449.4 M123662215515.6 17396068787.7L5197.6 -397.2 M413.4 -578.6L220456713115.2 17636827728.7 M125757332047.5 17401280014.0L5258.7 -394.2 M426.7 -579.4L223152043284.1 17643531757.4 M127852449487.8 17406491364.1L5320.8 -391.0 M439.9 -580.2L225847375019.5 17650235911.3 M129947564187.9 17411702343.0L5384.1 -387.9 M452.9 -581.0L228542708378.8 17656940190.7 M132042683519.5 17416913940.6L5448.6 -384.6 M465.8 -581.7L1410879.7 107156.0 M134137795315.6 17422124548.1L5514.3 -381.3 M478.5 -582.5L301277.9 22138.6 M136232917610.8 17427336517.3L5581.2 -378.0 M491.1 -583.3L169755.1 12061.4 M138328030255.8 17432547248.3L5649.4 -374.5 M503.6 -584.0L118700.4 8149.6 M140423146772.7 17437758474.7L5719.0 -371.0 M516.0 -584.8L91564.8 6070.5 M142518264302.4 17442969824.9L5789.8 -367.5 M528.2 -585.5L74729.4 4780.6 M144613381861.8 17448181175.3L5862.1 -363.8 M540.3 -586.2L63265.1 3902.2 M146708497366.1 17453392277.7L5935.8 -360.1 M552.2 -586.9L54955.1 3265.5 M148803611783.3 17458603255.9L6011.0 -356.4 M564.1 -587.7L48655.0 2782.7 M150898732574.2 17463814978.6L6087.7 -352.5 M575.8 -588.4L43714.4 2404.2 M152993846961.7 17469025956.7L6165.9 -348.6 M587.4 -589.1L39736.0 2099.4 M155088961289.6 17474236934.8L6245.8 -344.6 M598.9 -589.8L36463.6 1848.6 M157184082259.1 17479448657.9L6327.4 -340.5 M610.3 -590.4L33724.7 1638.8 M159279196557.3 17484659635.8L6410.6 -336.3 M621.6 -591.1L31398.7 1460.6 M161374313089.1 17489870862.2L6495.7 -332.0 M632.7 -591.8L29398.6 1307.3 M163469430782.5 17495082212.9L6582.6 -327.7 M643.7 -592.5L27660.6 1174.2 M165564548505.7 17500293563.6L6671.3 -323.2 M654.7 -593.1L26136.2 1057.4 M167659662684.7 17505504541.3L6762.0 -318.6 M665.5 -593.8L24788.3 954.1 M169754778010.4 17510715643.2L6854.8 -314.0 M676.2 -594.4L23588.0 862.1 M171849899411.6 17515927367.4L6949.6 -309.2 M686.8 -595.1L22512.3 779.7 M173945009808.4 17521137971.4L7046.6 -304.3 M697.3 -595.7L21542.7 705.4 M176040130063.0 17526349571.3L7145.9 -299.4 M707.7 -596.3L20664.3 638.1 M178135244078.3 17531560548.5L7247.4 -294.3 M718.0 -596.9L19864.8 576.9 M180230361875.9 17536771899.4L7351.3 -289.0 M728.2 -597.5L19134.1 520.9 M182325479703.3 17541983250.5L7457.7 -283.7 M738.4 -598.2L18463.5 469.5 M184420596250.0 17547194476.9L7566.7 -278.2 M748.4 -598.8L17846.0 422.2 M186515711471.5 17552405578.5L7678.4 -272.6 M758.3 -599.4L17275.5 378.5 M188610828003.3 17557616804.9L7792.8 -266.9 M768.1 -600.0L16746.9 338.0 M190705941825.1 17562827781.7L7910.1 -261.0 M777.9 -600.5L16255.7 300.3 M192801062437.0 17568039382.4L8030.3 -254.9 M787.5 -601.1L15798.0 265.3 M194896176214.1 17573250359.1L8153.7 -248.7 M797.1 -601.7L15370.6 232.5 M196991296930.2 17578461960.1L8280.2 -242.4 M806.5 -602.3L14970.5 201.8 M199086410662.7 17583672936.7L8410.1 -235.9 M815.9 -602.8L14595.2 173.1 M201181528624.0 17588884288.0L8543.5 -229.2 M825.2 -603.4L14242.5 146.1 M203276645170.8 17594095514.4L8680.5 -222.3 M834.4 -603.9L13910.3 120.6 M205371760258.3 17599306615.8L8821.3 -215.2 M843.6 -604.5L13597.0 96.6 M207466876790.1 17604517842.2L8965.9 -207.9 M852.6 -605.0L13301.0 73.9 M209561994811.0 17609729193.6L9114.7 -200.5 M861.6 -605.6L13020.8 52.5 M211657111357.8 17614940420.0L9267.7 -192.8 M870.5 -606.1L12755.3 32.1 M213752226385.7 17620151521.2L9425.2 -184.9 M879.3 -606.7L12503.3 12.8 M215847341383.9 17625362622.4L9587.3 -176.7 M888.0 -607.2L12263.9 -5.5 M217942459449.4 17630573974.0L9754.2 -168.3 M896.7 -607.7L12036.0 -23.0 M220037577544.8 17635785325.6L9926.3 -159.7 M905.3 -608.2L11818.9 -39.6 M222132694091.5 17640996552.0L10103.6 -150.8 M913.8 -608.7L11611.9 -55.5 M224227812231.5 17646207903.8L10286.5 -141.6 M922.2 -609.2L11414.2 -70.6 M226322925576.9 17651418879.4L10475.2 -132.1 M930.6 -609.7L11225.2 -85.1 M228418043731.8 17656630231.2L10670.1 -122.3 M938.9 -610.2L11044.4 -99.0 M230513157002.7 17661841206.6L10871.3 -112.2 M947.1 -610.7L10871.3 -112.2" stroke="#272727" stroke-width="2.2" fill="none"/><path d="M-1069.9 -489.2L34478821807.1 17174240980.2" stroke="#a5435c" stroke-width="2.8" fill="none"/><path d="M-20900825108.7 17036494108.2L2615.9 -526.9" stroke="#6a992c" stroke-width="2.8" fill="none"/><defs>
<linearGradient id="gt" gradientUnits="userSpaceOnUse" x1="1060" y1="470" x2="1290" y2="670"><stop offset="0" stop-color="#a8a8a8"/><stop offset="1" stop-color="#c4c4c4"/></linearGradient>
<linearGradient id="gl" gradientUnits="userSpaceOnUse" x1="1000" y1="730" x2="1190" y2="640"><stop offset="0" stop-color="#898989"/><stop offset="1" stop-color="#a3a3a3"/></linearGradient>
<linearGradient id="gr" gradientUnits="userSpaceOnUse" x1="1230" y1="830" x2="1375" y2="555"><stop offset="0" stop-color="#b3b3b3"/><stop offset="1" stop-color="#c8c8c8"/></linearGradient>
</defs><polygon points="1167.5,453.8 994.5,574.4 1215.6,687.5 1379.9,546.3" fill="url(#gt)"/><polygon points="994.5,574.4 1215.6,687.5 1213.1,837.5 1008.0,721.4" fill="url(#gl)"/><polygon points="1215.6,687.5 1379.9,546.3 1366.2,692.2 1213.1,837.5" fill="url(#gr)"/><clipPath id="lowc"><polygon points="1001.4,649.6 1214.3,764.5 1213.1,837.5 1008.0,721.4"/><polygon points="1214.3,764.5 1372.9,620.9 1366.2,692.2 1213.1,837.5"/></clipPath><path clip-path="url(#lowc)" d="M-272314807071.6 16411146888.6L-1104.7 -487.1 M-270219690554.6 16416358115.0L-1101.5 -485.3 M-268124574037.7 16421569341.3L-1098.3 -483.6 M-266029457520.7 16426780567.6L-1095.0 -481.8 M-263934341003.7 16431991793.9L-1091.6 -480.0 M-261839224486.7 16437203020.3L-1088.2 -478.2 M-259744107969.8 16442414246.6L-1084.8 -476.3 M-257648991452.8 16447625472.9L-1081.3 -474.4 M-255553876751.6 16452836816.2L-1077.7 -472.5 M-253458760219.8 16458048042.5L-1074.1 -470.6 M-251363643687.9 16463259268.9L-1070.5 -468.6 M-249268523613.7 16468470261.2L-1066.8 -466.6 M-247173408867.9 16473681604.5L-1063.0 -464.6 M-245078292350.9 16478892830.9L-1059.2 -462.5 M-242983175833.9 16484104057.2L-1055.3 -460.4 M-240888059317.0 16489315283.5L-1051.4 -458.3 M-238792942800.0 16494526509.8L-1047.4 -456.1 M-236697826283.0 16499737736.2L-1043.3 -453.9 M-234602711433.0 16504949079.8L-1039.2 -451.7 M-232507593249.1 16510160188.8L-1035.0 -449.4 M-230412476732.1 16515371415.1L-1030.8 -447.1 M-228317360215.1 16520582641.5L-1026.4 -444.8 M-226222243698.1 16525793867.8L-1022.1 -442.4 M-224127127181.2 16531005094.1L-1017.6 -440.0 M-222032010664.2 16536216320.4L-1013.1 -437.6 M-219936894147.2 16541427546.8L-1008.4 -435.1 M-217841777630.2 16546638773.1L-1003.7 -432.5 M-215746659580.3 16551849881.8L-999.0 -430.0 M-213651544596.3 16557061225.7L-994.1 -427.3 M-211556429582.5 16562272569.8L-989.2 -424.7 M-209461311562.3 16567483678.4L-984.2 -422.0 M-207366195045.3 16572694904.7L-979.0 -419.2 M-205271077069.8 16577906013.3L-973.8 -416.4 M-203175962011.4 16583117357.4L-968.6 -413.5 M-201080845494.4 16588328583.7L-963.2 -410.6 M-198985728977.4 16593539810.0L-957.7 -407.7 M-196890611061.5 16598750918.4L-952.1 -404.6 M-194795495943.5 16603962262.7L-946.4 -401.6 M-192700379426.5 16609173489.0L-940.6 -398.4 M-190605262909.5 16614384715.3L-934.7 -395.2 M-188510145053.1 16619595823.6L-928.7 -392.0 M-186415028551.0 16624807049.8L-922.5 -388.7 M-184319913358.6 16630018394.3L-916.3 -385.3 M-182224796841.6 16635229620.6L-909.9 -381.9 M-180129680324.6 16640440846.9L-903.4 -378.3 M-178034562542.7 16645651955.0L-896.8 -374.8 M-175939447290.7 16650863299.6L-890.0 -371.1 M-173844330773.7 16656074525.9L-883.1 -367.4 M-171749214256.7 16661285752.2L-876.1 -363.6 M-169654096534.3 16666496860.1L-868.9 -359.7 M-167558981222.8 16671708204.9L-861.5 -355.7 M-165463864705.8 16676919431.2L-854.0 -351.7 M-163368748188.8 16682130657.5L-846.4 -347.5 M-161273629953.0 16687341706.0L-838.6 -343.3 M-159178514023.9 16692552991.6L-830.6 -339.0 M-157083398637.9 16697764336.5L-822.4 -334.6 M-154988282120.9 16702975562.8L-814.0 -330.1 M-152893165604.0 16708186789.2L-805.5 -325.4 M-150798048015.5 16713397896.7L-796.7 -320.7 M-148702933098.3 16718609301.2L-787.8 -315.9 M-146607816573.9 16723820527.6L-778.6 -310.9 M-144512700049.5 16729031753.9L-769.3 -305.9 M-142417584537.0 16734243099.2L-759.7 -300.7 M-140322467000.6 16739454206.6L-749.8 -295.4 M-138227349985.1 16744665373.4L-739.7 -289.9 M-136132233468.1 16749876599.8L-729.4 -284.4 M-134037116951.2 16755087826.1L-718.8 -278.6 M-131942000434.2 16760299052.4L-708.0 -272.8 M-129846883917.2 16765510278.7L-696.8 -266.8 M-127751767400.2 16770721505.1L-685.4 -260.6 M-125656651329.7 16775932791.0L-673.6 -254.2 M-123561534805.3 16781144017.3L-661.6 -247.7 M-121466418280.8 16786355243.7L-649.2 -241.0 M-119371301756.4 16791566470.0L-636.5 -234.2 M-117276185232.0 16796777696.4L-623.4 -227.1 M-115181068298.4 16801988863.0L-609.9 -219.8 M-113085951781.4 16807200089.3L-596.1 -212.3 M-110990835264.4 16812411315.7L-581.8 -204.6 M-108895718747.5 16817622542.0L-567.2 -196.7 M-106800602230.5 16822833768.3L-552.0 -188.5 M-104705485341.5 16828044934.9L-536.4 -180.1 M-102610369561.1 16833256280.8L-520.4 -171.4 M-100515252679.5 16838467447.3L-503.8 -162.5 M-98420136512.2 16843678733.5L-486.7 -153.2 M-96325019645.6 16848889899.9L-469.0 -143.7 M-94229903798.2 16854101246.0L-450.7 -133.8 M-92134786284.3 16859312292.7L-431.8 -123.6 M-90039670414.6 16864523638.8L-412.3 -113.1 M-87944553577.7 16869734805.2L-392.1 -102.2 M-85849436450.7 16874945911.7L-371.2 -90.9 M-83754320395.0 16880157227.9L-349.5 -79.1 M-81659203591.6 16885368394.2L-327.0 -67.0 M-79564087792.5 16890579770.6L-303.6 -54.4 M-77468970992.8 16895790936.9L-279.4 -41.3 M-75373854743.6 16901002223.2L-254.2 -27.7 M-73278737828.7 16906213359.5L-228.0 -13.5 M-71183621821.2 16911424706.0L-200.8 1.2 M-69088504802.2 16916635812.1L-172.4 16.5 M-66993388645.9 16921847128.6L-142.8 32.5 M-64898271891.0 16927058294.8L-111.9 49.2 M-62803155597.1 16932269581.3L-79.7 66.6 M-60708038749.2 16937480717.4L-46.0 84.8 M-37302.6 35669.5L-16732481267.4 17046862159.0 M-58612922027.7 16942691883.5L-10.7 103.8 M-14601.4 15097.7L-14037149579.4 17053566390.6 M-56517806626.2 16947903441.0L26.2 123.8 M-8295.7 9383.5L-11341817770.0 17060270476.5 M-54422689886.1 16953114607.1L65.0 144.7 M-5335.9 6701.3L-8646486055.1 17066974706.3 M-52327572928.5 16958325698.0L105.6 166.7 M-3617.4 5144.0L-5951154276.5 17073678822.4 M-50232456182.9 16963536849.0L148.4 189.8 M-2494.6 4126.5L-3255822525.9 17080383021.9 M-48137340011.7 16968748195.8L193.4 214.1 M-1703.5 3409.6L-560490757.9 17087087130.4 M-46042223115.5 16973959286.5L240.8 239.7 M-1116.1 2877.3L2134840997.6 17093791254.1 M-43947106877.3 16979170618.4L290.8 266.7 M-662.7 2466.4L4830172735.0 17100495347.4 M-41851990204.2 16984381784.4L343.7 295.2 M-302.0 2139.6L7525504459.9 17107199455.8 M-39756873369.4 16989592874.9L399.6 325.5 M-8.4 1873.5L10220836243.1 17113903685.7 M-37661757772.4 16994804508.7L459.0 357.5 M235.3 1652.7L12916168038.7 17120607900.5 M-35566641000.8 17000015629.5L522.0 391.6 M440.9 1466.4L15611499853.5 17127312115.4 M-33471524626.8 17005226938.9L589.1 427.8 M616.6 1307.1L18306831589.9 17134016239.0 M-31376407619.3 17010437916.0L660.6 466.5 M768.5 1169.5L21002163167.5 17140720240.8 M-29281291232.4 17015649217.9L737.1 507.8 M901.2 1049.3L23697495118.1 17147424547.1 M-27186174591.4 17020860372.4L819.0 552.0 M1018.0 943.4L26392826835.4 17154128670.6 M-25091058146.4 17026071647.9L906.9 599.5 M1121.7 849.5L29088158698.0 17160832885.6 M-22995941525.9 17031282802.4L1001.5 650.6 M1214.3 765.5L31783490354.0 17167536978.7 M-20900825108.7 17036494108.2L1103.7 705.8 M1297.6 690.1L34478822052.1 17174241102.2 M-18805708471.5 17041705232.3L1214.3 765.5 M1372.8 621.9L37174153740.6 17180945225.7 M-16710592186.0 17046916689.6L1334.5 830.4 M1441.1 560.0L39869485277.9 17187649288.1 M-14615475688.0 17052127965.2L1465.5 901.2 M1503.5 503.5L42564817240.1 17194353533.7 M-12520359088.9 17057339119.6L1608.9 978.7 M1560.5 451.8L45260148909.4 17201057657.1 M-10425242597.7 17062550421.7L1766.6 1063.8 M1613.0 404.2L47955480739.6 17207761841.7 M-8330125943.7 17067761428.3L1940.8 1157.9 M1661.4 360.3L50650812399.4 17214465965.1 M-6235009443.3 17072972707.7L2134.1 1262.3 M1706.2 319.8L53346144333.9 17221170180.2 M-4139892935.4 17078184009.9L2350.0 1378.9 M1747.7 282.1L56041476088.4 17227874334.3 M-2044776405.3 17083395281.8L2592.6 1510.0 M1786.4 247.1L58736807842.9 17234578488.3 M50340135.7 17088606432.3L2867.3 1658.4 M1822.5 214.4L61432139815.7 17241282703.5 M2145456677.1 17093817734.6L3180.8 1827.7 M1856.2 183.8L64127471352.0 17247986796.3 M4240573199.4 17099028885.0L3541.9 2022.8 M1887.8 155.2L66822803106.5 17254690950.3 M6335689697.5 17104240020.3L3962.6 2250.0 M1917.5 128.3L69518135108.1 17261395165.6 M8430806255.6 17109451322.6L4458.7 2518.0 M1945.4 103.0L72213466359.1 17268099197.0 M10525922738.9 17114662472.9L5052.7 2838.8 M1971.7 79.1L74908798370.2 17274803412.3 M12621039304.4 17119873760.1L5776.5 3229.7 M1996.6 56.6L77604129849.0 17281507504.9 M14716155754.2 17125084895.2L6678.0 3716.7 M2020.1 35.3L80299461593.9 17288211658.9 M16811272330.9 17130296182.4L7831.8 4339.9 M2042.3 15.2L82994793338.9 17294915812.9 M18906388788.1 17135507347.8L9361.1 5165.9 M2063.4 -3.9L85690125388.3 17301620028.3 M21001505379.7 17140718635.0L11484.7 6313.0 M2083.4 -22.1L88385456828.8 17308324120.9 M23096621781.0 17145929770.0L14632.7 8013.3 M2102.5 -39.4L91080788897.4 17315028336.4 M25191738428.5 17151141087.7L19781.8 10794.6 M2120.6 -55.8L93776120318.8 17321732428.8 M27286855243.8 17156352496.9L29729.0 16167.5 M2137.9 -71.5L96471451721.0 17328436521.2 M29381971686.1 17161563662.4L57032.5 30915.1 M2154.4 -86.4L99166783808.7 17335140736.8 M31477088393.2 17166774980.2L457721.5 247343.4 M2170.2 -100.7L101862115191.8 17341844829.2 M2185.3 -114.4L104557447298.6 17348549044.8 M2199.7 -127.5L107252779043.6 17355253198.7 M2213.5 -140.0L109948110788.5 17361957352.7 M2226.8 -152.0L112643442133.3 17368661445.0 M2239.5 -163.5L115338774278.4 17375365660.7 M2251.7 -174.6L118034105604.1 17382069752.9 M2263.5 -185.3L120729437768.4 17388773968.7 M2274.8 -195.5L123424769951.8 17395478184.4 M2285.7 -205.4L126120101706.4 17402182338.5 M2296.2 -214.9L128815432545.6 17408886368.8 M2306.3 -224.0L131510765215.4 17415590646.5 M2316.1 -232.9L134206096016.4 17422294676.7 M2325.5 -241.4L136901427751.8 17428998830.6 M2334.6 -249.7L139596760479.0 17435703108.5 M2343.4 -257.6L142292091222.5 17442407138.6 M2351.9 -265.4L144987422957.9 17449111292.5 M2360.1 -272.8L147682754693.3 17455815446.5 M2368.1 -280.0L150378086428.7 17462519600.4 M2375.8 -287.0L153073418164.1 17469223754.4 M2383.3 -293.8L155768751006.3 17475928032.5 M2390.5 -300.4L158464081634.9 17482632062.3 M2397.6 -306.7L161159413370.2 17489336216.3 M2404.4 -312.9L163854746269.9 17496040494.6 M2411.0 -318.9L166550076841.0 17502744524.2 M2417.5 -324.8L169245409779.0 17509448802.6 M2423.7 -330.4L171940741533.5 17516152956.6 M2429.8 -336.0L174636072047.2 17522856986.1 M2435.7 -341.3L177331405042.6 17529561264.6 M2441.5 -346.5L180026736797.1 17536265418.6 M2447.1 -351.6L182722067253.3 17542969448.0 M2452.5 -356.6L185417398988.7 17549673601.9 M2457.8 -361.4L188112732060.7 17556377880.6 M2463.0 -366.1L190808062459.5 17563081909.8 M2468.0 -370.6L193503394194.9 17569786063.8 M2473.0 -375.1L196198727324.3 17576490342.7 M2477.8 -379.4L198894057665.6 17583194371.7 M2482.4 -383.7L201589389401.0 17589898525.7 M2487.0 -387.8L204284722587.9 17596602804.7 M2491.5 -391.8L206980052871.8 17603306833.6 M2495.8 -395.8L209675384607.2 17610010987.6 M2500.1 -399.6L212370717851.5 17616715266.7 M2504.2 -403.4L215066048078.0 17623419295.5 M2508.3 -407.1L217761379813.3 17630123449.4 M2512.2 -410.7L220456713115.2 17636827728.7 M2516.1 -414.2L223152043284.1 17643531757.4 M2519.9 -417.6L225847375019.5 17650235911.3 M2523.6 -421.0L228542708378.8 17656940190.7 M2527.2 -424.3L1410879.7 107156.0 M2530.8 -427.5L301277.9 22138.6 M2534.3 -430.6L169755.1 12061.4 M2537.7 -433.7L118700.4 8149.6 M2541.0 -436.7L91564.8 6070.5 M2544.3 -439.7L74729.4 4780.6 M2547.5 -442.6L63265.1 3902.2 M2550.6 -445.4L54955.1 3265.5 M2553.7 -448.2L48655.0 2782.7 M2556.7 -450.9L43714.4 2404.2 M2559.6 -453.6L39736.0 2099.4 M2562.5 -456.2L36463.6 1848.6 M2565.4 -458.8L33724.7 1638.8 M2568.2 -461.4L31398.7 1460.6 M2570.9 -463.8L29398.6 1307.3 M2573.6 -466.3L27660.6 1174.2 M2576.2 -468.7L26136.2 1057.4 M2578.8 -471.0L24788.3 954.1 M2581.3 -473.3L23588.0 862.1 M2583.8 -475.6L22512.3 779.7 M2586.3 -477.8L21542.7 705.4 M2588.7 -480.0L20664.3 638.1 M2591.1 -482.1L19864.8 576.9 M2593.4 -484.2L19134.1 520.9 M2595.7 -486.3L18463.5 469.5 M2597.9 -488.3L17846.0 422.2 M2600.1 -490.3L17275.5 378.5 M2602.3 -492.3L16746.9 338.0 M2604.4 -494.2L16255.7 300.3 M2606.5 -496.1L15798.0 265.3 M2608.6 -498.0L15370.6 232.5 M2610.6 -499.8L14970.5 201.8 M2612.6 -501.7L14595.2 173.1 M2614.6 -503.4L14242.5 146.1 M2616.5 -505.2L13910.3 120.6 M2618.5 -506.9L13597.0 96.6 M2620.3 -508.6L13301.0 73.9 M2622.2 -510.3L13020.8 52.5 M2624.0 -512.0L12755.3 32.1 M2625.8 -513.6L12503.3 12.8 M2627.6 -515.2L12263.9 -5.5 M2629.3 -516.8L12036.0 -23.0 M2631.0 -518.3L11818.9 -39.6 M2632.7 -519.8L11611.9 -55.5 M2634.4 -521.3L11414.2 -70.6 M2636.0 -522.8L11225.2 -85.1 M2637.6 -524.3L11044.4 -99.0 M2639.2 -525.7L10871.3 -112.2" stroke="rgba(50,50,50,0.25)" stroke-width="2" fill="none"/><path clip-path="url(#lowc)" d="M1297.6 690.1L34478822052.1 17174241102.2" stroke="#a5435c" stroke-width="2.8" fill="none"/><path clip-path="url(#lowc)" d="M-20900825108.7 17036494108.2L1103.7 705.8" stroke="#6a992c" stroke-width="2.8" fill="none"/><path d="M1001.5 650.6L1214.3 765.5L1372.8 621.9" stroke="rgba(60,60,60,0.18)" stroke-width="2" fill="none"/></svg>
</div>
<svg style="position:absolute;left:0px;top:0px;pointer-events:none;" width="3104" height="1802" viewBox="0 0 3104 1802"><circle cx="1301.4" cy="863.4" r="20" stroke="#ffffff" stroke-width="2" fill="none" stroke-dasharray="7 5"/><circle cx="1301.4" cy="863.4" r="20" stroke="#d22d3c" stroke-width="2" fill="none" stroke-dasharray="5 7" stroke-dashoffset="-7"/><path d="M1301.4 832V855M1301.4 872V894M1270 848L1291 858M1312 868L1334 879M1276.4 883.5L1293 870M1309 856L1325.6 843.5" stroke="#111" stroke-width="1.6"/><circle cx="1301.4" cy="863.4" r="6.5" fill="#f5a623" stroke="#000" stroke-width="2.6"/></svg>
<div style="position:absolute;left:129.0px;top:233.0px;width:220.0px;height:40.0px;background:rgba(43,43,43,0.95);border-radius:7px;"></div>
<svg style="position:absolute;left:138px;top:238px;" width="32" height="32" viewBox="0 0 32 32"><path d="M2 9V2H9M23 2H30V9M30 23V30H23M9 30H2V23" stroke="#c8c8c8" stroke-width="2.2" fill="none"/><rect x="8" y="8" width="16" height="16" fill="#dcdcdc"/></svg>
<div class="t" style="left:181.0px;top:240.9px;font-size:24px;line-height:24px;color:#dcdcdc;">Object Mode</div>
<svg style="position:absolute;left:326px;top:245px;" width="18" height="18" viewBox="0 0 18 18"><path d="M2 6L9 13L16 6" stroke="#9a9a9a" stroke-width="2.6" fill="none"/></svg>
<div style="position:absolute;left:361.0px;top:234.0px;width:77.6px;height:38.0px;background:rgba(43,43,43,0.95);border-radius:7px;"></div>
<div class="t" style="left:-0.2px;width:800px;text-align:center;top:240.9px;font-size:24px;line-height:24px;color:#dcdcdc;">View</div>
<div style="position:absolute;left:443.0px;top:234.0px;width:90.0px;height:38.0px;background:rgba(43,43,43,0.95);border-radius:7px;"></div>
<div class="t" style="left:88.0px;width:800px;text-align:center;top:240.9px;font-size:24px;line-height:24px;color:#dcdcdc;">Select</div>
<div style="position:absolute;left:538.0px;top:234.0px;width:66.0px;height:38.0px;background:rgba(43,43,43,0.95);border-radius:7px;"></div>
<div class="t" style="left:171.0px;width:800px;text-align:center;top:240.9px;font-size:24px;line-height:24px;color:#dcdcdc;">Add</div>
<div style="position:absolute;left:609.0px;top:234.0px;width:94.0px;height:38.0px;background:rgba(43,43,43,0.95);border-radius:7px;"></div>
<div class="t" style="left:256.0px;width:800px;text-align:center;top:240.9px;font-size:24px;line-height:24px;color:#dcdcdc;">Object</div>
<div style="position:absolute;left:1976.0px;top:233.0px;width:63.7px;height:39.6px;background:#2b2b2b;border-radius:7px;"></div>
<svg style="position:absolute;left:1982px;top:237px;" width="36" height="34" viewBox="0 0 36 34"><path d="M10 12 C16 2 28 2 34 12 C28 22 16 22 10 12Z" fill="#dcdcdc"/><circle cx="22" cy="12" r="5" fill="#2b2b2b"/><circle cx="22" cy="12" r="2.5" fill="#dcdcdc"/><path d="M4 15L18 22L12 24L10 32Z" fill="#dcdcdc"/></svg>
<svg style="position:absolute;left:2018px;top:244px;" width="18" height="18" viewBox="0 0 18 18"><path d="M2 6L9 13L16 6" stroke="#9a9a9a" stroke-width="2.6" fill="none"/></svg>
<div style="position:absolute;left:2052.0px;top:233.0px;width:77.7px;height:39.6px;background:#2b2b2b;border-radius:7px;"></div>
<div style="position:absolute;left:2052.0px;top:233.0px;width:36.0px;height:39.6px;background:#4a73b5;border-radius:7px 0 0 7pxpx;"></div>
<svg style="position:absolute;left:2055px;top:237px;" width="32" height="32" viewBox="0 0 32 32"><path d="M4 12 C14 10 22 18 24 30" stroke="#fff" stroke-width="2.2" fill="none"/><path d="M6 26L26 6M18 5H27V14" stroke="#fff" stroke-width="2.2" fill="none"/><circle cx="6" cy="26" r="3" fill="#4a73b5" stroke="#fff" stroke-width="2"/></svg>
<svg style="position:absolute;left:2099px;top:244px;" width="18" height="18" viewBox="0 0 18 18"><path d="M2 6L9 13L16 6" stroke="#9a9a9a" stroke-width="2.6" fill="none"/></svg>
<div style="position:absolute;left:2142.0px;top:233.0px;width:77.7px;height:39.6px;background:#2b2b2b;border-radius:7px;"></div>
<div style="position:absolute;left:2142.0px;top:233.0px;width:36.0px;height:39.6px;background:#4a73b5;border-radius:7px 0 0 7pxpx;"></div>
<svg style="position:absolute;left:2145px;top:237px;" width="32" height="32" viewBox="0 0 32 32"><circle cx="19" cy="12" r="10" fill="#fff"/><circle cx="12" cy="20" r="9" stroke="#fff" stroke-width="2.2" fill="none"/><path d="M10 10 L14 14 M20 20 L24 24" stroke="#4a73b5" stroke-width="2"/></svg>
<svg style="position:absolute;left:2189px;top:244px;" width="18" height="18" viewBox="0 0 18 18"><path d="M2 6L9 13L16 6" stroke="#9a9a9a" stroke-width="2.6" fill="none"/></svg>
<div style="position:absolute;left:2231.7px;top:233.0px;width:36.8px;height:39.6px;background:#2b2b2b;border-radius:7px;"></div>
<svg style="position:absolute;left:2235px;top:237px;" width="30" height="30" viewBox="0 0 30 30"><rect x="10" y="4" width="16" height="16" stroke="#a8a8a8" stroke-width="2" fill="none"/><rect x="4" y="10" width="16" height="16" stroke="#a8a8a8" stroke-width="2" fill="none" stroke-dasharray="6 3"/></svg>
<div style="position:absolute;left:2281.4px;top:233.0px;width:192.4px;height:39.6px;background:#2b2b2b;border-radius:7px;"></div>
<div style="position:absolute;left:2281.4px;top:233.0px;width:113.6px;height:39.6px;background:#545454;border-radius:7px 0 0 7pxpx;"></div>
<div style="position:absolute;left:2395.0px;top:233.0px;width:37.5px;height:39.6px;background:#4a73b5;"></div>
<div style="position:absolute;left:2318.3px;top:233.0px;width:1.5px;height:39.6px;background:#3d3d3d;"></div>
<div style="position:absolute;left:2356.4px;top:233.0px;width:1.5px;height:39.6px;background:#3d3d3d;"></div>
<svg style="position:absolute;left:2285px;top:238px;" width="30" height="30" viewBox="0 0 30 30"><circle cx="15" cy="15" r="12" stroke="#dcdcdc" stroke-width="2.2" fill="none"/><ellipse cx="15" cy="15" rx="5.5" ry="12" stroke="#dcdcdc" stroke-width="2" fill="none"/><path d="M3 11H27M3 19H27" stroke="#dcdcdc" stroke-width="2"/></svg>
<svg style="position:absolute;left:2323px;top:238px;" width="30" height="30" viewBox="0 0 30 30"><circle cx="15" cy="15" r="12.5" fill="#dcdcdc"/></svg>
<svg style="position:absolute;left:2361px;top:238px;" width="30" height="30" viewBox="0 0 30 30"><circle cx="15" cy="15" r="12" stroke="#dcdcdc" stroke-width="2.2" fill="#545454"/><path d="M15 3 A12 12 0 0 1 27 15 L15 15Z" fill="#dcdcdc"/><path d="M3 15 A12 12 0 0 0 15 27 L15 15Z" fill="#dcdcdc"/></svg>
<svg style="position:absolute;left:2399px;top:238px;" width="30" height="30" viewBox="0 0 30 30"><circle cx="15" cy="15" r="12" stroke="#fff" stroke-width="2.4" fill="#4a73b5"/><path d="M8 13 C8 8 12 6 15 6" stroke="#fff" stroke-width="2.2" fill="none"/></svg>
<svg style="position:absolute;left:2444px;top:244px;" width="18" height="18" viewBox="0 0 18 18"><path d="M2 6L9 13L16 6" stroke="#9a9a9a" stroke-width="2.6" fill="none"/></svg>
<div style="position:absolute;left:128.5px;top:295.6px;width:83.2px;height:139.4px;background:#2e2e2e;border-radius:9px;"></div>
<div style="position:absolute;left:128.5px;top:446.0px;width:83.2px;height:278.3px;background:#2e2e2e;border-radius:9px;"></div>
<div style="position:absolute;left:128.5px;top:735.0px;width:83.2px;height:139.0px;background:#2e2e2e;border-radius:9px;"></div>
<div style="position:absolute;left:128.5px;top:446.0px;width:83.2px;height:67.8px;background:#5680c2;border-radius:9px 9px 0 0px;"></div>
<svg style="position:absolute;left:145px;top:306px;" width="46" height="46" viewBox="0 0 46 46"><rect x="3" y="3" width="40" height="40" stroke="#e0b15c" stroke-width="2.4" fill="none" stroke-dasharray="6 4.5"/><path d="M18 13L33 26L25 27L20 34Z" fill="#dcdcdc"/></svg>
<svg style="position:absolute;left:144px;top:375px;" width="48" height="48" viewBox="0 0 48 48"><circle cx="24" cy="24" r="21" stroke="#fff" stroke-width="3" fill="none" stroke-dasharray="8 5"/><circle cx="24" cy="24" r="21" stroke="#b03545" stroke-width="3" fill="none" stroke-dasharray="5 8" stroke-dashoffset="-8"/><path d="M24 10V19M24 29V38M10 24H19M29 24H38" stroke="#dcdcdc" stroke-width="2"/></svg>
<svg style="position:absolute;left:144px;top:456px;" width="48" height="48" viewBox="0 0 48 48"><g fill="#e8e8e8"><path d="M24 1L30 9H18Z"/><path d="M24 47L30 39H18Z"/><path d="M1 24L9 18V30Z"/><path d="M47 24L39 18V30Z"/><rect x="22" y="12" width="4" height="6"/><rect x="22" y="30" width="4" height="6"/><rect x="12" y="22" width="6" height="4"/><rect x="30" y="22" width="6" height="4"/></g></svg>
<svg style="position:absolute;left:144px;top:525px;" width="48" height="48" viewBox="0 0 48 48"><path d="M9 17 A17 17 0 0 1 40 17" stroke="#dcdcdc" stroke-width="2.4" fill="none"/><path d="M39 31 A17 17 0 0 1 8 31" stroke="#dcdcdc" stroke-width="2.4" fill="none"/><path d="M2 22H16L9 32Z M32 26H46L39 16Z" fill="#dcdcdc"/><path d="M24 16L31 24L24 32L17 24Z" fill="#aaaaaa"/></svg>
<svg style="position:absolute;left:144px;top:594px;" width="48" height="48" viewBox="0 0 48 48"><path d="M10 10H40V40H26" stroke="#bdbdbd" stroke-width="2.4" fill="none"/><rect x="6" y="24" width="18" height="18" fill="#dcdcdc"/><path d="M24 24L36 12M28 12H36V20" stroke="#dcdcdc" stroke-width="2.4" fill="none"/></svg>
<svg style="position:absolute;left:144px;top:664px;" width="48" height="48" viewBox="0 0 48 48"><path d="M8 18 A18 18 0 0 1 18 7M30 7 A18 18 0 0 1 41 18M41 30 A18 18 0 0 1 30 41M18 41 A18 18 0 0 1 7 30" stroke="#dcdcdc" stroke-width="2.4" fill="none"/><rect x="15" y="15" width="18" height="18" fill="#dcdcdc"/><path d="M24 2L29 8H19ZM24 46L29 40H19ZM2 24L8 19V29ZM46 24L40 19V29Z" fill="#dcdcdc"/></svg>
<svg style="position:absolute;left:144px;top:746px;" width="48" height="48" viewBox="0 0 48 48"><path d="M6 30L30 6L36 12L12 36L5 37Z" fill="#dcdcdc"/><path d="M8 40 C16 34 24 30 30 36 C34 40 40 38 44 34" stroke="#8cd1a8" stroke-width="2.4" fill="none"/></svg>
<svg style="position:absolute;left:144px;top:818px;" width="48" height="48" viewBox="0 0 48 48"><path d="M11 42 V12 A30 30 0 0 1 41 42Z" fill="#8fd9ab"/><path d="M9 4H14V44M6 44H46V39" stroke="#e8e8e8" stroke-width="2.6" fill="none"/><path d="M9 10H13M9 16H13M9 22H13M9 28H13M9 34H13M18 40V44M24 40V44M30 40V44M36 40V44" stroke="#e8e8e8" stroke-width="1.5"/></svg>
<svg style="position:absolute;left:200px;top:352px;" width="9" height="9" viewBox="0 0 9 9"><path d="M9 0V9H0Z" fill="#8a8a8a"/></svg>
<svg style="position:absolute;left:200px;top:642px;" width="9" height="9" viewBox="0 0 9 9"><path d="M9 0V9H0Z" fill="#8a8a8a"/></svg>
<svg style="position:absolute;left:200px;top:788px;" width="9" height="9" viewBox="0 0 9 9"><path d="M9 0V9H0Z" fill="#8a8a8a"/></svg>
<div class="t" style="left:269.0px;top:300.4px;font-size:24px;line-height:24px;color:#f2f2f2;">User Perspective</div>
<div class="t" style="left:269.0px;top:340.4px;font-size:24px;line-height:24px;color:#f2f2f2;">(1) Collection | Cube</div>
<svg style="position:absolute;left:0px;top:0px;pointer-events:none;" width="3104" height="1802" viewBox="0 0 3104 1802"><line x1="2390.2" y1="378.4" x2="2390.2" y2="328.7" stroke="#2c8fff" stroke-width="2"/><line x1="2390.2" y1="378.4" x2="2429.8" y2="345.9" stroke="#6a9a26" stroke-width="2"/><line x1="2390.2" y1="378.4" x2="2440.7" y2="403.8" stroke="#ff3352" stroke-width="2"/><circle cx="2339" cy="353.3" r="12" fill="#a8394c"/><circle cx="2350" cy="411.2" r="12" fill="#8bdc00"/><circle cx="2390.2" cy="428.4" r="12" fill="#3a73b8"/><circle cx="2390.2" cy="328.7" r="15" fill="#2c8fff"/><circle cx="2429.8" cy="345.9" r="15" fill="#6b9a26"/><circle cx="2440.7" cy="403.8" r="15" fill="#ff3352"/><text x="2390.2" y="337" font-size="21" text-anchor="middle" fill="#111" font-family="Liberation Sans">Z</text><text x="2429.8" y="354" font-size="21" text-anchor="middle" fill="#111" font-family="Liberation Sans">Y</text><text x="2440.7" y="412" font-size="21" text-anchor="middle" fill="#111" font-family="Liberation Sans">X</text><circle cx="2444" cy="488.5" r="27" fill="rgba(24,24,24,0.85)"/><circle cx="2444" cy="549" r="27" fill="rgba(24,24,24,0.85)"/><circle cx="2444" cy="610" r="27" fill="rgba(24,24,24,0.85)"/><circle cx="2444" cy="671" r="27" fill="rgba(24,24,24,0.85)"/></svg>
<svg style="position:absolute;left:2422px;top:466px;" width="44" height="44" viewBox="0 0 44 44"><circle cx="25" cy="18" r="11" fill="#dcdcdc"/><path d="M25 11V25M18 18H32" stroke="#1e1e1e" stroke-width="2.2"/><path d="M17 26L8 35" stroke="#dcdcdc" stroke-width="5" stroke-linecap="round"/></svg>
<svg style="position:absolute;left:2422px;top:527px;" width="44" height="44" viewBox="0 0 44 44"><path d="M10 26 L8 16 C8 13 12 13 12 16 L13 22 L13 8 C13 5 17 5 17 8 L18 20 L19 5 C19 2 23 2 23 5 L23 20 L25 7 C25 4 29 4 29 7 L28 22 L31 15 C32 12 36 13 35 16 L31 30 C29 37 25 40 19 40 C14 40 11 35 10 26Z" fill="#dcdcdc"/></svg>
<svg style="position:absolute;left:2422px;top:588px;" width="44" height="44" viewBox="0 0 44 44"><circle cx="14" cy="14" r="7" fill="#dcdcdc"/><circle cx="27" cy="12" r="7" fill="#dcdcdc"/><circle cx="14" cy="14" r="2.5" fill="#1e1e1e"/><circle cx="27" cy="12" r="2.5" fill="#1e1e1e"/><rect x="10" y="22" width="20" height="13" fill="#dcdcdc"/><path d="M30 28L38 22V36Z" fill="#dcdcdc"/><rect x="6" y="25" width="5" height="6" fill="#dcdcdc"/></svg>
<svg style="position:absolute;left:2422px;top:649px;" width="44" height="44" viewBox="0 0 44 44"><path d="M10 8H34L40 38H4Z" stroke="#dcdcdc" stroke-width="2.4" fill="none"/><path d="M18 8L15 38M26 8L29 38M7 18H37M5 28H39" stroke="#dcdcdc" stroke-width="2.4"/></svg>
<svg style="position:absolute;left:2478px;top:312px;" width="10" height="16" viewBox="0 0 10 16"><path d="M8 2L2 8L8 14" stroke="#8a8a8a" stroke-width="2" fill="none"/></svg>
<div style="position:absolute;left:112.0px;top:1498.0px;width:2377.0px;height:117.0px;background:#1d1d1d;"></div>
<div style="position:absolute;left:112.0px;top:1505.0px;width:2377.0px;height:104.0px;background:#2b2b2b;border-radius:9px;"></div>
<div style="position:absolute;left:112.0px;top:1505.0px;width:2377.0px;height:49.5px;background:#3d3d3d;border-radius:9px 9px 0 0px;"></div>
<div style="position:absolute;left:130.0px;top:1512.4px;width:60.0px;height:35.6px;background:#2b2b2b;border-radius:7px;"></div>
<svg style="position:absolute;left:138px;top:1516px;" width="30" height="30" viewBox="0 0 30 30"><circle cx="15" cy="15" r="14" fill="#dcdcdc"/><path d="M18 7L11 15L18 23" stroke="#2b2b2b" stroke-width="3" fill="none"/></svg>
<svg style="position:absolute;left:169px;top:1522px;" width="18" height="18" viewBox="0 0 18 18"><path d="M2 6L9 13L16 6" stroke="#9a9a9a" stroke-width="2.6" fill="none"/></svg>
<div style="position:absolute;left:204.0px;top:1512.4px;width:262.4px;height:35.6px;background:#2b2b2b;border-radius:7px;"></div>
<div style="position:absolute;left:345.0px;top:1512.4px;width:1.5px;height:35.6px;background:#3d3d3d;"></div>
<div class="t" style="left:218.0px;top:1519.4px;font-size:24px;line-height:24px;color:#dcdcdc;">Playback</div>
<svg style="position:absolute;left:324px;top:1522px;" width="18" height="18" viewBox="0 0 18 18"><path d="M2 6L9 13L16 6" stroke="#9a9a9a" stroke-width="2.6" fill="none"/></svg>
<div class="t" style="left:361.0px;top:1519.4px;font-size:24px;line-height:24px;color:#dcdcdc;">Keying</div>
<svg style="position:absolute;left:444px;top:1522px;" width="18" height="18" viewBox="0 0 18 18"><path d="M2 6L9 13L16 6" stroke="#9a9a9a" stroke-width="2.6" fill="none"/></svg>
<div class="t" style="left:482.6px;top:1519.4px;font-size:24px;line-height:24px;color:#dcdcdc;">View</div>
<div class="t" style="left:564.3px;top:1519.4px;font-size:24px;line-height:24px;color:#dcdcdc;">Marker</div>
<div style="position:absolute;left:1136.0px;top:1512.6px;width:36.0px;height:35.0px;background:#545454;border-radius:7px;"></div>
<svg style="position:absolute;left:1143px;top:1519px;" width="22" height="22" viewBox="0 0 22 22"><circle cx="11" cy="11" r="8" fill="#dcdcdc"/></svg>
<div style="position:absolute;left:1186.0px;top:1512.6px;width:236.0px;height:35.0px;background:#545454;border-radius:7px;"></div>
<div style="position:absolute;left:1225.3px;top:1512.6px;width:1.5px;height:35.0px;background:#3d3d3d;"></div>
<div style="position:absolute;left:1264.7px;top:1512.6px;width:1.5px;height:35.0px;background:#3d3d3d;"></div>
<div style="position:absolute;left:1304.0px;top:1512.6px;width:1.5px;height:35.0px;background:#3d3d3d;"></div>
<div style="position:absolute;left:1343.3px;top:1512.6px;width:1.5px;height:35.0px;background:#3d3d3d;"></div>
<div style="position:absolute;left:1382.7px;top:1512.6px;width:1.5px;height:35.0px;background:#3d3d3d;"></div>
<svg style="position:absolute;left:1188.0px;top:1512px;" width="36" height="36" viewBox="0 0 36 36"><rect x="7" y="8" width="4" height="20" fill="#e0e0e0"/><path d="M28 8V28L12 18Z" fill="#e0e0e0"/></svg>
<svg style="position:absolute;left:1227.33px;top:1512px;" width="36" height="36" viewBox="0 0 36 36"><path d="M3 18L10 9L17 18L10 27Z" fill="#e0e0e0"/><path d="M31 9V27L19 18Z" fill="#e0e0e0"/></svg>
<svg style="position:absolute;left:1266.66px;top:1512px;" width="36" height="36" viewBox="0 0 36 36"><path d="M27 6V30L8 18Z" fill="#e0e0e0"/></svg>
<svg style="position:absolute;left:1305.99px;top:1512px;" width="36" height="36" viewBox="0 0 36 36"><path d="M10 6V30L29 18Z" fill="#e0e0e0"/></svg>
<svg style="position:absolute;left:1345.32px;top:1512px;" width="36" height="36" viewBox="0 0 36 36"><path d="M5 9V27L17 18Z" fill="#e0e0e0"/><path d="M19 18L26 9L33 18L26 27Z" fill="#e0e0e0"/></svg>
<svg style="position:absolute;left:1384.65px;top:1512px;" width="36" height="36" viewBox="0 0 36 36"><path d="M8 8V28L24 18Z" fill="#e0e0e0"/><rect x="25" y="8" width="4" height="20" fill="#e0e0e0"/></svg>
<div style="position:absolute;left:1902.6px;top:1512.0px;width:145.9px;height:36.3px;background:#545454;border-radius:7px;"></div>
<div class="t" style="left:1575.5px;width:800px;text-align:center;top:1518.4px;font-size:24px;line-height:24px;color:#e6e6e6;">1</div>
<div style="position:absolute;left:2063.0px;top:1512.0px;width:386.5px;height:36.3px;background:#545454;border-radius:7px;"></div>
<div style="position:absolute;left:2099.4px;top:1512.0px;width:1.5px;height:36.3px;background:#3d3d3d;"></div>
<div style="position:absolute;left:2279.0px;top:1512.0px;width:1.5px;height:36.3px;background:#3d3d3d;"></div>
<svg style="position:absolute;left:2066px;top:1513px;" width="34" height="34" viewBox="0 0 34 34"><circle cx="16" cy="19" r="11" stroke="#e0e0e0" stroke-width="2.2" fill="none"/><path d="M16 12V19H22M12 5H20M16 5V8M26 7L28 9" stroke="#e0e0e0" stroke-width="2.2" fill="none"/></svg>
<div class="t" style="left:2132.0px;top:1518.4px;font-size:24px;line-height:24px;color:#e6e6e6;">Start</div>
<div class="t" style="right:851.0px;top:1518.4px;font-size:24px;line-height:24px;color:#e6e6e6;text-align:right;">1</div>
<div class="t" style="left:2313.0px;top:1518.4px;font-size:24px;line-height:24px;color:#e6e6e6;">End</div>
<div class="t" style="right:680.0px;top:1518.4px;font-size:24px;line-height:24px;color:#e6e6e6;text-align:right;">250</div>
<div style="position:absolute;left:176.0px;top:1560.5px;width:49.5px;height:29.5px;background:#4a73b5;border-radius:7px 7px 0 0px;"></div>
<div class="t" style="left:-199.2px;width:800px;text-align:center;top:1565.9px;font-size:24px;line-height:24px;color:#ffffff;">1</div>
<div class="t" style="left:-32.0px;width:800px;text-align:center;top:1565.9px;font-size:24px;line-height:24px;color:#b4b4b4;">20</div>
<div class="t" style="left:144.5px;width:800px;text-align:center;top:1565.9px;font-size:24px;line-height:24px;color:#b4b4b4;">40</div>
<div class="t" style="left:321.1px;width:800px;text-align:center;top:1565.9px;font-size:24px;line-height:24px;color:#b4b4b4;">60</div>
<div class="t" style="left:497.6px;width:800px;text-align:center;top:1565.9px;font-size:24px;line-height:24px;color:#b4b4b4;">80</div>
<div class="t" style="left:674.1px;width:800px;text-align:center;top:1565.9px;font-size:24px;line-height:24px;color:#b4b4b4;">100</div>
<div class="t" style="left:850.7px;width:800px;text-align:center;top:1565.9px;font-size:24px;line-height:24px;color:#b4b4b4;">120</div>
<div class="t" style="left:1027.2px;width:800px;text-align:center;top:1565.9px;font-size:24px;line-height:24px;color:#b4b4b4;">140</div>
<div class="t" style="left:1203.7px;width:800px;text-align:center;top:1565.9px;font-size:24px;line-height:24px;color:#b4b4b4;">160</div>
<div class="t" style="left:1380.2px;width:800px;text-align:center;top:1565.9px;font-size:24px;line-height:24px;color:#b4b4b4;">180</div>
<div class="t" style="left:1556.8px;width:800px;text-align:center;top:1565.9px;font-size:24px;line-height:24px;color:#b4b4b4;">200</div>
<div class="t" style="left:1733.3px;width:800px;text-align:center;top:1565.9px;font-size:24px;line-height:24px;color:#b4b4b4;">220</div>
<div class="t" style="left:1909.8px;width:800px;text-align:center;top:1565.9px;font-size:24px;line-height:24px;color:#b4b4b4;">240</div>
<div style="position:absolute;left:2401.0px;top:1554.5px;width:1.5px;height:54.0px;background:#1f1f1f;"></div>
<div style="position:absolute;left:112.0px;top:1588.0px;width:2377.0px;height:21.0px;background:#262626;"></div>
<div style="position:absolute;left:130.0px;top:1589.5px;width:2342.0px;height:16.0px;background:#6a6a6a;border-radius:8px;"></div>
<svg style="position:absolute;left:131px;top:1590px;" width="16" height="16" viewBox="0 0 16 16"><circle cx="8" cy="8" r="6" fill="#505050"/></svg>
<svg style="position:absolute;left:2455px;top:1590px;" width="16" height="16" viewBox="0 0 16 16"><circle cx="8" cy="8" r="6" fill="#505050"/></svg>
<svg style="position:absolute;left:114px;top:1589px;" width="12" height="18" viewBox="0 0 12 18"><path d="M3 3L9 9L3 15" stroke="#8a8a8a" stroke-width="2.2" fill="none"/></svg>
<svg style="position:absolute;left:2477px;top:1589px;" width="12" height="18" viewBox="0 0 12 18"><path d="M9 3L3 9L9 15" stroke="#8a8a8a" stroke-width="2.2" fill="none"/></svg>
<div style="position:absolute;left:2489.0px;top:176.0px;width:7.0px;height:1439.0px;background:#1d1d1d;"></div>
<div style="position:absolute;left:2495.5px;top:176.0px;width:495.5px;height:458.0px;background:#282828;border-radius:9px 9px 9px 9pxpx;"></div>
<div style="position:absolute;left:2495.5px;top:176.0px;width:495.5px;height:51.0px;background:#3d3d3d;border-radius:9px 9px 0 0px;"></div>
<div style="position:absolute;left:2513.0px;top:183.0px;width:59.5px;height:35.0px;background:#2b2b2b;border-radius:7px;"></div>
<svg style="position:absolute;left:2519px;top:186px;" width="32" height="30" viewBox="0 0 32 30"><rect x="2" y="2" width="10" height="6" fill="#dcdcdc"/><path d="M5 8V26H12M5 17H12" stroke="#a8a8a8" stroke-width="2" fill="none"/><rect x="13" y="13" width="14" height="6" fill="#dcdcdc"/><rect x="13" y="22" width="14" height="6" fill="#dcdcdc"/></svg>
<svg style="position:absolute;left:2552px;top:191px;" width="18" height="18" viewBox="0 0 18 18"><path d="M2 6L9 13L16 6" stroke="#9a9a9a" stroke-width="2.6" fill="none"/></svg>
<div style="position:absolute;left:2588.0px;top:183.0px;width:58.0px;height:35.0px;background:#2b2b2b;border-radius:7px;"></div>
<svg style="position:absolute;left:2594px;top:186px;" width="30" height="30" viewBox="0 0 30 30"><path d="M2 9V27H20" stroke="#dcdcdc" stroke-width="2" fill="none"/><path d="M5 6V24H23" stroke="#dcdcdc" stroke-width="2" fill="none"/><rect x="8" y="2" width="18" height="18" stroke="#dcdcdc" stroke-width="2.2" fill="none"/><path d="M10 18L16 9L22 18Z" fill="#dcdcdc"/><circle cx="22" cy="7" r="2" fill="#dcdcdc"/></svg>
<svg style="position:absolute;left:2626px;top:191px;" width="18" height="18" viewBox="0 0 18 18"><path d="M2 6L9 13L16 6" stroke="#9a9a9a" stroke-width="2.6" fill="none"/></svg>
<div style="position:absolute;left:2683.0px;top:183.0px;width:228.0px;height:35.0px;background:#1d1d1d;border-radius:9px;"></div>
<svg style="position:absolute;left:2690px;top:187px;" width="30" height="30" viewBox="0 0 30 30"><circle cx="17" cy="11" r="8" stroke="#dcdcdc" stroke-width="2.2" fill="none"/><path d="M11 17L3 26" stroke="#dcdcdc" stroke-width="2.4"/></svg>
<div style="position:absolute;left:2947.6px;top:183.0px;width:39.4px;height:35.0px;background:#2b2b2b;border-radius:7px 0 0 7pxpx;"></div>
<svg style="position:absolute;left:2953px;top:186px;" width="30" height="30" viewBox="0 0 30 30"><path d="M2 3H27L17 15V27L12 23V15Z" stroke="#e0e0e0" stroke-width="2.2" fill="none" stroke-linejoin="miter"/></svg>
<div style="position:absolute;left:2495.5px;top:267.0px;width:495.5px;height:40.0px;background:#2b2b2b;"></div>
<div style="position:absolute;left:2495.5px;top:347.0px;width:495.5px;height:40.0px;background:#2b2b2b;"></div>
<div style="position:absolute;left:2495.5px;top:427.0px;width:495.5px;height:40.0px;background:#2b2b2b;"></div>
<div style="position:absolute;left:2495.5px;top:507.0px;width:495.5px;height:40.0px;background:#2b2b2b;"></div>
<div style="position:absolute;left:2495.5px;top:587.0px;width:495.5px;height:40.0px;background:#2b2b2b;"></div>
<div style="position:absolute;left:2495.5px;top:627.0px;width:495.5px;height:7.0px;background:#282828;"></div>
<svg style="position:absolute;left:2540px;top:233px;" width="30" height="30" viewBox="0 0 30 30"><rect x="2" y="3" width="26" height="6" stroke="#e6e6e6" stroke-width="2" fill="none"/><rect x="4" y="12" width="22" height="16" stroke="#e6e6e6" stroke-width="2.2" fill="none"/><rect x="12" y="16" width="6" height="3" rx="1.5" fill="#e6e6e6"/></svg>
<div class="t" style="left:2583.0px;top:239.4px;font-size:24px;line-height:24px;color:#e0e0e0;letter-spacing:0px;">Scene Collection</div>
<svg style="position:absolute;left:2547px;top:282px;" width="14" height="14" viewBox="0 0 14 14"><path d="M1.4000000000000001 2.8000000000000003L12.6 2.8000000000000003L7 11.9Z" fill="#c0c0c0"/></svg>
<div style="position:absolute;left:2585.0px;top:278.0px;width:20.0px;height:20.0px;background:#dcdcdc;border-radius:3px;"></div>
<svg style="position:absolute;left:2585px;top:278px;" width="20" height="20" viewBox="0 0 20 20"><path d="M4 10L8 15L16 5" stroke="#111" stroke-width="2.8" fill="none"/></svg>
<div style="position:absolute;left:2615.0px;top:270.0px;width:40.0px;height:35.6px;background:#4a4a4a;border-radius:7px;"></div>
<svg style="position:absolute;left:2620px;top:273px;" width="30" height="30" viewBox="0 0 30 30"><rect x="2" y="3" width="26" height="6" stroke="#e6e6e6" stroke-width="2" fill="none"/><rect x="4" y="12" width="22" height="16" stroke="#e6e6e6" stroke-width="2.2" fill="none"/><rect x="12" y="16" width="6" height="3" rx="1.5" fill="#e6e6e6"/></svg>
<div class="t" style="left:2663.6px;top:279.4px;font-size:24px;line-height:24px;color:#e0e0e0;letter-spacing:0px;">Collection</div>
<div style="position:absolute;left:2593.0px;top:298.0px;width:2.0px;height:111.0px;background:#8a8a8a;"></div>
<div style="position:absolute;left:2594.0px;top:328.0px;width:31.0px;height:2.0px;background:#6a6a6a;"></div>
<svg style="position:absolute;left:2588px;top:321px;" width="14" height="16" viewBox="0 0 14 16"><path d="M1 1L13 8L1 15Z" fill="#c8c8c8"/></svg>
<div style="position:absolute;left:2594.0px;top:368.0px;width:31.0px;height:2.0px;background:#6a6a6a;"></div>
<svg style="position:absolute;left:2588px;top:361px;" width="14" height="16" viewBox="0 0 14 16"><path d="M1 1L13 8L1 15Z" fill="#c8c8c8"/></svg>
<div style="position:absolute;left:2594.0px;top:408.0px;width:31.0px;height:2.0px;background:#6a6a6a;"></div>
<svg style="position:absolute;left:2588px;top:401px;" width="14" height="16" viewBox="0 0 14 16"><path d="M1 1L13 8L1 15Z" fill="#c8c8c8"/></svg>
<svg style="position:absolute;left:2617px;top:310px;" width="34" height="36" viewBox="0 0 34 36"><circle cx="9" cy="9" r="7" fill="#e0914a"/><circle cx="22" cy="8" r="8" fill="#e0914a"/><circle cx="9" cy="9" r="2.5" fill="#282828"/><circle cx="22" cy="8" r="2.5" fill="#282828"/><rect x="6" y="18" width="18" height="14" fill="#e0914a"/><path d="M24 25L32 19V33Z" fill="#e0914a"/><rect x="2" y="21" width="5" height="6" fill="#e0914a"/></svg>
<div class="t" style="left:2663.6px;top:319.4px;font-size:24px;line-height:24px;color:#e0e0e0;letter-spacing:0px;">Camera</div>
<div style="position:absolute;left:2787.0px;top:309.8px;width:40.0px;height:36.1px;background:#5a5a5a;border-radius:8px;"></div>
<svg style="position:absolute;left:2790px;top:312px;" width="34" height="34" viewBox="0 0 34 34"><path d="M4 12 C4 5 10 4 14 8 C17 3 26 3 28 9 C30 14 26 17 22 17 H8 C5 17 4 15 4 12Z" stroke="#33c4a3" stroke-width="2.2" fill="none"/><circle cx="10" cy="11" r="1.8" fill="#33c4a3"/><circle cx="22" cy="10" r="1.8" fill="#33c4a3"/><rect x="8" y="21" width="14" height="10" stroke="#33c4a3" stroke-width="2" fill="none"/><path d="M22 26L30 21V31Z" stroke="#33c4a3" stroke-width="2" fill="none"/><path d="M3 24H8M5 22V28" stroke="#33c4a3" stroke-width="2"/></svg>
<div style="position:absolute;left:2615.0px;top:350.0px;width:40.0px;height:36.0px;background:#5a5a5a;border-radius:8px;"></div>
<svg style="position:absolute;left:2618px;top:353px;" width="34" height="30" viewBox="0 0 34 30"><path d="M3 3H31L17 28Z" fill="#e0914a"/><path d="M11 8H23L17 19Z" fill="#5a5a5a"/></svg>
<div class="t" style="left:2663.6px;top:359.4px;font-size:24px;line-height:24px;color:#e0e0e0;letter-spacing:0px;">Cube</div>
<svg style="position:absolute;left:2760px;top:352px;" width="34" height="34" viewBox="0 0 34 34"><path d="M6 6H28L17 27Z" stroke="#33c4a3" stroke-width="2.2" fill="none"/><rect x="2" y="2" width="7" height="7" fill="#2b2b2b" stroke="#33c4a3" stroke-width="2"/><rect x="25" y="2" width="7" height="7" fill="#2b2b2b" stroke="#33c4a3" stroke-width="2"/><rect x="14" y="24" width="7" height="7" fill="#2b2b2b" stroke="#33c4a3" stroke-width="2"/></svg>
<svg style="position:absolute;left:2620px;top:392px;" width="30" height="36" viewBox="0 0 30 36"><circle cx="14" cy="13" r="12" fill="#e0914a"/><path d="M8 11H20M10 11V18M18 11V18M12 15H16" stroke="#282828" stroke-width="1.8"/><rect x="8" y="26" width="12" height="3" fill="#e0914a"/><rect x="9" y="31" width="10" height="3" fill="#e0914a"/></svg>
<div class="t" style="left:2663.6px;top:399.4px;font-size:24px;line-height:24px;color:#e0e0e0;letter-spacing:0px;">Light</div>
<svg style="position:absolute;left:2759px;top:393px;" width="32" height="34" viewBox="0 0 32 34"><path d="M9 26 A12 12 0 1 1 23 26" stroke="#33c4a3" stroke-width="2.2" fill="none"/><circle cx="16" cy="15" r="3" stroke="#33c4a3" stroke-width="2" fill="none"/><path d="M16 18V22M16 25V28M16 30V33" stroke="#33c4a3" stroke-width="2"/></svg>
<svg style="position:absolute;left:2941px;top:276px;" width="30" height="22" viewBox="0 0 30 22"><path d="M2 11 C8 1 22 1 28 11 C22 21 8 21 2 11Z" fill="#e6e6e6"/><circle cx="15" cy="11" r="5" fill="#2a2a2a"/><circle cx="15" cy="11" r="2.2" fill="#e6e6e6"/></svg>
<svg style="position:absolute;left:2941px;top:316px;" width="30" height="22" viewBox="0 0 30 22"><path d="M2 11 C8 1 22 1 28 11 C22 21 8 21 2 11Z" fill="#e6e6e6"/><circle cx="15" cy="11" r="5" fill="#2a2a2a"/><circle cx="15" cy="11" r="2.2" fill="#e6e6e6"/></svg>
<svg style="position:absolute;left:2941px;top:356px;" width="30" height="22" viewBox="0 0 30 22"><path d="M2 11 C8 1 22 1 28 11 C22 21 8 21 2 11Z" fill="#e6e6e6"/><circle cx="15" cy="11" r="5" fill="#2a2a2a"/><circle cx="15" cy="11" r="2.2" fill="#e6e6e6"/></svg>
<svg style="position:absolute;left:2941px;top:396px;" width="30" height="22" viewBox="0 0 30 22"><path d="M2 11 C8 1 22 1 28 11 C22 21 8 21 2 11Z" fill="#e6e6e6"/><circle cx="15" cy="11" r="5" fill="#2a2a2a"/><circle cx="15" cy="11" r="2.2" fill="#e6e6e6"/></svg>
<div style="position:absolute;left:2495.5px;top:641.0px;width:495.5px;height:968.0px;background:#3d3d3d;border-radius:9px;"></div>
<div style="position:absolute;left:2495.5px;top:641.0px;width:495.5px;height:50.0px;background:#3d3d3d;border-radius:9px 9px 0 0px;"></div>
<div style="position:absolute;left:2512.8px;top:646.7px;width:60.2px;height:36.1px;background:#2b2b2b;border-radius:7px;"></div>
<svg style="position:absolute;left:2519px;top:649px;" width="34" height="34" viewBox="0 0 34 34"><rect x="2" y="3" width="24" height="11" rx="5.5" fill="#dcdcdc"/><rect x="2" y="18" width="24" height="11" rx="5.5" fill="#dcdcdc"/><rect x="14" y="6" width="9" height="5" rx="2.5" fill="#2b2b2b"/><rect x="14" y="21" width="9" height="5" rx="2.5" fill="#2b2b2b"/></svg>
<svg style="position:absolute;left:2552px;top:656px;" width="18" height="18" viewBox="0 0 18 18"><path d="M2 6L9 13L16 6" stroke="#9a9a9a" stroke-width="2.6" fill="none"/></svg>
<svg style="position:absolute;left:2602px;top:651px;" width="30" height="30" viewBox="0 0 30 30"><path d="M2 8V2H8M22 2H28V8M28 22V28H22M8 28H2V22" stroke="#bdbdbd" stroke-width="2" fill="none"/><rect x="7" y="7" width="16" height="16" fill="#e6e6e6"/></svg>
<div class="t" style="left:2648.5px;top:655.4px;font-size:24px;line-height:24px;color:#e6e6e6;">Cube</div>
<svg style="position:absolute;left:2722px;top:655px;" width="14" height="22" viewBox="0 0 14 22"><path d="M3 3L11 11L3 19" stroke="#4a4a4a" stroke-width="2" fill="none"/></svg>
<svg style="position:absolute;left:2766px;top:651px;" width="30" height="30" viewBox="0 0 30 30"><circle cx="15" cy="15" r="13" fill="#e6e6e6"/><path d="M15 2 A13 13 0 0 1 28 15 H15Z" fill="#3d3d3d"/><path d="M15 28 A13 13 0 0 1 2 15 H15Z" fill="#3d3d3d"/><circle cx="15" cy="15" r="13" stroke="#e6e6e6" stroke-width="2.2" fill="none"/></svg>
<div class="t" style="left:2812.5px;top:655.4px;font-size:24px;line-height:24px;color:#e6e6e6;">Material</div>
<svg style="position:absolute;left:2940px;top:649px;" width="32" height="34" viewBox="0 0 32 34"><path d="M3 31L13 21" stroke="#8a8a8a" stroke-width="2.4"/><path d="M12 15 L21 6 L28 13 L19 22 Z M9 18L16 25" stroke="#8a8a8a" stroke-width="2.2" fill="none"/></svg>
<div style="position:absolute;left:2495.5px;top:691.0px;width:57.0px;height:918.0px;background:#1d1d1d;"></div>
<div style="position:absolute;left:2495.5px;top:1560.0px;width:56.5px;height:49.0px;background:#1d1d1d;border-radius:0 0 0 9pxpx;"></div>
<div style="position:absolute;left:2499.7px;top:709.0px;width:52.3px;height:46.0px;background:#2b2b2b;border-radius:9px 0 0 9pxpx;"></div>
<div style="position:absolute;left:2499.7px;top:781.0px;width:52.3px;height:53.0px;background:#2b2b2b;border-radius:9px 0 0 9pxpx;"></div>
<div style="position:absolute;left:2499.7px;top:837.0px;width:52.3px;height:53.0px;background:#2b2b2b;border-radius:9px 0 0 9pxpx;"></div>
<div style="position:absolute;left:2499.7px;top:893.0px;width:52.3px;height:53.0px;background:#2b2b2b;border-radius:9px 0 0 9pxpx;"></div>
<div style="position:absolute;left:2499.7px;top:949.0px;width:52.3px;height:53.0px;background:#2b2b2b;border-radius:9px 0 0 9pxpx;"></div>
<div style="position:absolute;left:2499.7px;top:1005.0px;width:52.3px;height:53.0px;background:#2b2b2b;border-radius:9px 0 0 9pxpx;"></div>
<div style="position:absolute;left:2499.7px;top:1076.0px;width:52.3px;height:53.0px;background:#2b2b2b;border-radius:9px 0 0 9pxpx;"></div>
<div style="position:absolute;left:2499.7px;top:1132.7px;width:52.3px;height:53.0px;background:#2b2b2b;border-radius:9px 0 0 9pxpx;"></div>
<div style="position:absolute;left:2499.7px;top:1188.5px;width:52.3px;height:53.0px;background:#2b2b2b;border-radius:9px 0 0 9pxpx;"></div>
<div style="position:absolute;left:2499.7px;top:1245.0px;width:52.3px;height:53.0px;background:#2b2b2b;border-radius:9px 0 0 9pxpx;"></div>
<div style="position:absolute;left:2499.7px;top:1302.0px;width:52.3px;height:53.0px;background:#2b2b2b;border-radius:9px 0 0 9pxpx;"></div>
<div style="position:absolute;left:2499.7px;top:1356.0px;width:52.3px;height:53.0px;background:#2b2b2b;border-radius:9px 0 0 9pxpx;"></div>
<div style="position:absolute;left:2499.7px;top:1413.0px;width:52.3px;height:53.0px;background:#3d3d3d;border-radius:9px 0 0 9pxpx;"></div>
<div style="position:absolute;left:2499.7px;top:1485.0px;width:52.3px;height:53.0px;background:#2b2b2b;border-radius:9px 0 0 9pxpx;"></div>
<svg style="position:absolute;left:2509px;top:716px;" width="32" height="32" viewBox="0 0 32 32"><path d="M8 4V20" stroke="#dcdcdc" stroke-width="2.2"/><rect x="4.5" y="19" width="7.5" height="13" rx="3.5" fill="#dcdcdc"/><path d="M19.5 4 V9 C19.5 13 22 15 24.5 15 C27 15 29.5 13 29.5 9 V4" stroke="#dcdcdc" stroke-width="3.6" fill="none"/><path d="M24.5 15 V30" stroke="#dcdcdc" stroke-width="4.6" stroke-linecap="round"/><circle cx="24.5" cy="29" r="1.2" fill="#2b2b2b"/></svg>
<svg style="position:absolute;left:2509px;top:791px;" width="32" height="32" viewBox="0 0 32 32"><rect x="3" y="9" width="26" height="18" rx="2" fill="#dcdcdc"/><rect x="7" y="5" width="8" height="4" fill="#dcdcdc"/><path d="M6 14H20M6 18H20M6 22H20" stroke="#2b2b2b" stroke-width="1.5"/><circle cx="25" cy="14" r="2" fill="#2b2b2b"/><circle cx="25" cy="21" r="2" fill="#2b2b2b"/></svg>
<svg style="position:absolute;left:2509px;top:847px;" width="32" height="32" viewBox="0 0 32 32"><rect x="2" y="4" width="28" height="9" rx="2" fill="#dcdcdc"/><rect x="8" y="13" width="16" height="16" fill="#a8a8a8"/><path d="M10 27L16 19L22 27Z" fill="#2b2b2b"/></svg>
<svg style="position:absolute;left:2509px;top:903px;" width="32" height="32" viewBox="0 0 32 32"><path d="M2 9V30H22" stroke="#c8c8c8" stroke-width="2" fill="none"/><path d="M6 5V26H26" stroke="#c8c8c8" stroke-width="2" fill="none"/><rect x="10" y="2" width="18" height="18" fill="#dcdcdc"/><path d="M12 18L18 9L25 18Z" fill="#2b2b2b"/><circle cx="24" cy="6" r="2" fill="#2b2b2b"/></svg>
<svg style="position:absolute;left:2509px;top:959px;" width="32" height="32" viewBox="0 0 32 32"><path d="M9 3 L16 20 C16 26 2 26 2 20Z" fill="#dcdcdc"/><circle cx="24" cy="7" r="4" fill="#dcdcdc"/><circle cx="19" cy="22" r="7" fill="#2b2b2b" stroke="#dcdcdc" stroke-width="2.4"/></svg>
<svg style="position:absolute;left:2509px;top:1015px;" width="32" height="32" viewBox="0 0 32 32"><circle cx="17" cy="15.8" r="12" stroke="#e37886" stroke-width="2" fill="none"/><path d="M9 9 L14 5.5 L21 6 L19 10 L15 12 L13 17 L10.5 15 Z" fill="#e8707e"/><path d="M15 18 L21 19 L22.5 23 L19.5 27 L15.5 26.5 Z" fill="#e8707e"/><path d="M27 5 L31 1.5 M3 30 L6.5 26.5" stroke="#e37886" stroke-width="2"/></svg>
<svg style="position:absolute;left:2509px;top:1086px;" width="32" height="32" viewBox="0 0 32 32"><path d="M2 8V2H8M22 2H28V8M28 22V28H22M8 28H2V22" stroke="#e0914a" stroke-width="2" fill="none"/><rect x="7" y="7" width="16" height="16" fill="#e0914a"/></svg>
<svg style="position:absolute;left:2509px;top:1143px;" width="32" height="32" viewBox="0 0 32 32"><path d="M4 26 L16 14" stroke="#6f9be0" stroke-width="6" stroke-linecap="round"/><path d="M15 14 C12 8 17 2 24 3 L20 8 L23 11 L28 7 C29 14 22 18 17 15" fill="#6f9be0"/></svg>
<svg style="position:absolute;left:2509px;top:1199px;" width="32" height="32" viewBox="0 0 32 32"><circle cx="6" cy="6" r="4.5" fill="#6f9be0"/><circle cx="6" cy="26" r="3" fill="#6f9be0"/><circle cx="26" cy="25" r="3.5" fill="#6f9be0"/><circle cx="26" cy="6" r="3" fill="#6f9be0"/><path d="M6 6V26M6 6H26M6 6L26 25" stroke="#6f9be0" stroke-width="1.8"/></svg>
<svg style="position:absolute;left:2509px;top:1255px;" width="32" height="32" viewBox="0 0 32 32"><path d="M20.5 3 A13.5 13.5 0 1 0 27.3 24.7" stroke="#a8b8d8" stroke-width="2" fill="none"/><circle cx="17" cy="16" r="6" fill="#6f9be0"/><circle cx="27" cy="6" r="4" fill="#6f9be0"/></svg>
<svg style="position:absolute;left:2509px;top:1312px;" width="32" height="32" viewBox="0 0 32 32"><path d="M3 22 C3 12 14 10 26 2 C22 14 20 26 10 28 C6 29 3 26 3 22Z" stroke="#6f9be0" stroke-width="2.4" fill="none"/><circle cx="11" cy="21" r="5" stroke="#6f9be0" stroke-width="2.4" fill="none"/><circle cx="22" cy="8" r="2" fill="#6f9be0"/></svg>
<svg style="position:absolute;left:2509px;top:1366px;" width="32" height="32" viewBox="0 0 32 32"><path d="M6 6H26L16 26Z" stroke="#33c4a3" stroke-width="2.2" fill="none"/><rect x="2" y="2" width="7" height="7" fill="#2b2b2b" stroke="#33c4a3" stroke-width="2"/><rect x="23" y="2" width="7" height="7" fill="#2b2b2b" stroke="#33c4a3" stroke-width="2"/><rect x="13" y="23" width="7" height="7" fill="#2b2b2b" stroke="#33c4a3" stroke-width="2"/></svg>
<svg style="position:absolute;left:2509px;top:1423px;" width="32" height="32" viewBox="0 0 32 32"><circle cx="16" cy="16" r="13" fill="#e86e7a"/><path d="M16 3 A13 13 0 0 1 29 16 H16Z" fill="#3d3d3d"/><path d="M16 29 A13 13 0 0 1 3 16 H16Z" fill="#3d3d3d"/><circle cx="16" cy="16" r="13" stroke="#e86e7a" stroke-width="2.2" fill="none"/></svg>
<svg style="position:absolute;left:2509px;top:1495px;" width="32" height="32" viewBox="0 0 32 32"><rect x="3" y="3" width="26" height="26" fill="#e86e7a"/><rect x="3.0" y="9.5" width="6.5" height="6.5" fill="#2b2b2b"/><rect x="3.0" y="22.5" width="6.5" height="6.5" fill="#2b2b2b"/><rect x="9.5" y="3.0" width="6.5" height="6.5" fill="#2b2b2b"/><rect x="9.5" y="16.0" width="6.5" height="6.5" fill="#2b2b2b"/><rect x="16.0" y="9.5" width="6.5" height="6.5" fill="#2b2b2b"/><rect x="16.0" y="22.5" width="6.5" height="6.5" fill="#2b2b2b"/><rect x="22.5" y="3.0" width="6.5" height="6.5" fill="#2b2b2b"/><rect x="22.5" y="16.0" width="6.5" height="6.5" fill="#2b2b2b"/></svg>
<div style="position:absolute;left:2569.7px;top:691.0px;width:347.8px;height:13.7px;background:#383838;border-radius:0 0 9px 9pxpx;"></div>
<div style="position:absolute;left:2569.7px;top:719.0px;width:323.8px;height:36.0px;background:#2b2b2b;border-radius:7px;"></div>
<svg style="position:absolute;left:2576px;top:722px;" width="30" height="30" viewBox="0 0 30 30"><circle cx="15" cy="15" r="13" fill="#e6e6e6"/><path d="M15 2 A13 13 0 0 1 28 15 H15Z" fill="#2b2b2b"/><path d="M15 28 A13 13 0 0 1 2 15 H15Z" fill="#2b2b2b"/><circle cx="15" cy="15" r="13" stroke="#e6e6e6" stroke-width="2.2" fill="none"/></svg>
<svg style="position:absolute;left:2609px;top:729px;" width="18" height="18" viewBox="0 0 18 18"><path d="M2 6L9 13L16 6" stroke="#9a9a9a" stroke-width="2.6" fill="none"/></svg>
<div style="position:absolute;left:2630.5px;top:719.0px;width:143.5px;height:36.0px;background:#1d1d1d;"></div>
<div style="position:absolute;left:2774.0px;top:719.0px;width:119.5px;height:36.0px;background:#545454;"></div>
<div style="position:absolute;left:2854.5px;top:719.0px;width:39.0px;height:36.0px;background:#545454;border-radius:0 7px 7px 0px;"></div>
<div style="position:absolute;left:2813.5px;top:719.0px;width:1.5px;height:36.0px;background:#444;"></div>
<div style="position:absolute;left:2853.5px;top:719.0px;width:1.5px;height:36.0px;background:#444;"></div>
<svg style="position:absolute;left:2781px;top:722px;" width="28" height="30" viewBox="0 0 28 30"><path d="M14 3 L25 7 V15 C25 22 19 26 14 28 C9 26 3 22 3 15 V7Z" stroke="#8a8a8a" stroke-width="2" fill="none"/></svg>
<svg style="position:absolute;left:2819px;top:722px;" width="30" height="30" viewBox="0 0 30 30"><path d="M7 9H4V25H18V22" stroke="#e6e6e6" stroke-width="2.2" fill="none"/><path d="M9 4H18L23 9V20H9Z" stroke="#e6e6e6" stroke-width="2.2" fill="none"/><path d="M18 4V9H23" fill="#e6e6e6"/></svg>
<svg style="position:absolute;left:2864px;top:727px;" width="20" height="20" viewBox="0 0 20 20"><path d="M3 3L17 17M17 3L3 17" stroke="#e0e0e0" stroke-width="2.2"/></svg>
<div class="t" style="left:2645.0px;top:727.4px;font-size:24px;line-height:24px;color:#f0f0f0;">Material</div>
<div style="position:absolute;left:2914.0px;top:719.0px;width:60.0px;height:36.0px;background:#2b2b2b;border-radius:7px;"></div>
<svg style="position:absolute;left:2920px;top:722px;" width="30" height="30" viewBox="0 0 30 30"><path d="M5 5H25L15 26Z" stroke="#dcdcdc" stroke-width="2" fill="none"/><rect x="2" y="2" width="6" height="6" fill="#2b2b2b" stroke="#dcdcdc" stroke-width="2"/><rect x="22" y="2" width="6" height="6" fill="#2b2b2b" stroke="#dcdcdc" stroke-width="2"/><rect x="12" y="23" width="6" height="6" fill="#2b2b2b" stroke="#dcdcdc" stroke-width="2"/></svg>
<svg style="position:absolute;left:2953px;top:729px;" width="18" height="18" viewBox="0 0 18 18"><path d="M2 6L9 13L16 6" stroke="#9a9a9a" stroke-width="2.6" fill="none"/></svg>
<svg style="position:absolute;left:2569px;top:789px;" width="16" height="16" viewBox="0 0 16 16"><path d="M3.2 1.6L13.6 8L3.2 14.4Z" fill="#a8a8a8"/></svg>
<div class="t" style="left:2597.0px;top:786.9px;font-size:24px;line-height:24px;color:#e6e6e6;text-shadow:0 1px 2px rgba(0,0,0,0.7);">Preview</div>
<svg style="position:absolute;left:2569px;top:837px;" width="16" height="16" viewBox="0 0 16 16"><path d="M1.6 3.2L14.4 3.2L8 13.6Z" fill="#a8a8a8"/></svg>
<div class="t" style="left:2597.0px;top:834.9px;font-size:24px;line-height:24px;color:#e6e6e6;text-shadow:0 1px 2px rgba(0,0,0,0.7);">Surface</div>
<svg style="position:absolute;left:2953px;top:793px;" width="24" height="12" viewBox="0 0 24 12"><rect x="0" y="0" width="3" height="3" fill="#2a2a2a"/><rect x="0" y="6" width="3" height="3" fill="#2a2a2a"/><rect x="6" y="0" width="3" height="3" fill="#2a2a2a"/><rect x="6" y="6" width="3" height="3" fill="#2a2a2a"/><rect x="12" y="0" width="3" height="3" fill="#2a2a2a"/><rect x="12" y="6" width="3" height="3" fill="#2a2a2a"/><rect x="18" y="0" width="3" height="3" fill="#2a2a2a"/><rect x="18" y="6" width="3" height="3" fill="#2a2a2a"/></svg>
<svg style="position:absolute;left:2953px;top:841px;" width="24" height="12" viewBox="0 0 24 12"><rect x="0" y="0" width="3" height="3" fill="#2a2a2a"/><rect x="0" y="6" width="3" height="3" fill="#2a2a2a"/><rect x="6" y="0" width="3" height="3" fill="#2a2a2a"/><rect x="6" y="6" width="3" height="3" fill="#2a2a2a"/><rect x="12" y="0" width="3" height="3" fill="#2a2a2a"/><rect x="12" y="6" width="3" height="3" fill="#2a2a2a"/><rect x="18" y="0" width="3" height="3" fill="#2a2a2a"/><rect x="18" y="6" width="3" height="3" fill="#2a2a2a"/></svg>
<div style="position:absolute;left:2552.0px;top:869.0px;width:439.0px;height:740.0px;background:#3a3a3a;"></div>
<div style="position:absolute;left:2569.7px;top:887.0px;width:404.3px;height:35.7px;background:#4a73b5;border-radius:7px;"></div>
<svg style="position:absolute;left:2574px;top:888px;" width="36" height="34" viewBox="0 0 36 34"><rect x="7" y="3" width="17" height="12" rx="3.5" fill="#fff"/><rect x="3" y="19" width="17" height="12" rx="3.5" fill="#fff"/><path d="M9 12H22M5 28H18" stroke="#4a73b5" stroke-width="1.4"/><path d="M26 7 C30 7 31 9 31 12 V22 C31 25 30 27 26 27 H23" stroke="#c8d6ee" stroke-width="2" fill="none"/><path d="M21 27L25 24V30Z" fill="#c8d6ee"/><path d="M25 4V10" stroke="#c8d6ee" stroke-width="2"/></svg>
<div class="t" style="left:2389.0px;width:800px;text-align:center;top:893.4px;font-size:24px;line-height:24px;color:#ffffff;">Use Nodes</div>
<div class="t" style="right:356.0px;top:965.9px;font-size:24px;line-height:24px;color:#e6e6e6;text-align:right;letter-spacing:0px;">Surface</div>
<div style="position:absolute;left:2782.0px;top:958.8px;width:192.0px;height:36.1px;background:#282828;border-radius:7px;"></div>
<div class="t" style="left:2795.5px;top:965.9px;font-size:24px;line-height:24px;color:#e6e6e6;letter-spacing:0px;">Principled B..</div>
<svg style="position:absolute;left:2946px;top:967px;" width="20" height="20" viewBox="0 0 20 20"><circle cx="10" cy="10" r="5.5" stroke="#e6e6e6" stroke-width="2.2" fill="none"/></svg>
<div style="position:absolute;left:2782.0px;top:1031.0px;width:192.0px;height:35.4px;background:#282828;border-radius:7px;"></div>
<div class="t" style="left:2795.5px;top:1037.9px;font-size:24px;line-height:24px;color:#e6e6e6;">GGX</div>
<svg style="position:absolute;left:2953px;top:1040px;" width="18" height="18" viewBox="0 0 18 18"><path d="M2 6L9 13L16 6" stroke="#9a9a9a" stroke-width="2.6" fill="none"/></svg>
<div style="position:absolute;left:2782.0px;top:1075.8px;width:192.0px;height:35.0px;background:#282828;border-radius:7px;"></div>
<div class="t" style="left:2795.5px;top:1082.4px;font-size:24px;line-height:24px;color:#e6e6e6;letter-spacing:0px;">Christensen-..</div>
<svg style="position:absolute;left:2953px;top:1084px;" width="18" height="18" viewBox="0 0 18 18"><path d="M2 6L9 13L16 6" stroke="#9a9a9a" stroke-width="2.6" fill="none"/></svg>
<div class="t" style="right:356.0px;top:1131.9px;font-size:24px;line-height:24px;color:#e6e6e6;text-align:right;letter-spacing:0px;">Base Color</div>
<div style="position:absolute;left:2782.0px;top:1125.0px;width:192.0px;height:36.0px;background:#282828;border-radius:7px;"></div>
<div style="position:absolute;left:2782.0px;top:1125.0px;width:152.0px;height:36.0px;background:#ffffff;border-radius:7px 0 0 7pxpx;"></div>
<svg style="position:absolute;left:2946px;top:1133px;" width="20" height="20" viewBox="0 0 20 20"><circle cx="10" cy="10" r="5.5" stroke="#e6e6e6" stroke-width="2.2" fill="none"/></svg>
<div class="t" style="right:356.0px;top:1181.9px;font-size:24px;line-height:24px;color:#e6e6e6;text-align:right;letter-spacing:0px;">Subsurface</div>
<div style="position:absolute;left:2782.0px;top:1175.0px;width:192.0px;height:36.0px;background:#282828;border-radius:7px;"></div>
<div style="position:absolute;left:2782.0px;top:1175.0px;width:152.0px;height:36.0px;background:#565656;border-radius:7px 0 0 7pxpx;"></div>
<div class="t" style="left:2458.0px;width:800px;text-align:center;top:1181.9px;font-size:24px;line-height:24px;color:#e6e6e6;">0.000</div>
<svg style="position:absolute;left:2946px;top:1183px;" width="20" height="20" viewBox="0 0 20 20"><circle cx="10" cy="10" r="5.5" stroke="#e6e6e6" stroke-width="2.2" fill="none"/></svg>
<div class="t" style="right:356.0px;top:1232.4px;font-size:24px;line-height:24px;color:#e6e6e6;text-align:right;letter-spacing:0px;">Subsurface R..</div>
<div style="position:absolute;left:2782.0px;top:1225.6px;width:136.0px;height:115.4px;background:#565656;border-radius:7px;"></div>
<div style="position:absolute;left:2782.0px;top:1262.0px;width:136.0px;height:1.5px;background:#3d3d3d;"></div>
<div style="position:absolute;left:2782.0px;top:1301.0px;width:136.0px;height:1.5px;background:#3d3d3d;"></div>
<div class="t" style="left:2450.0px;width:800px;text-align:center;top:1232.4px;font-size:24px;line-height:24px;color:#e6e6e6;">1.000</div>
<div class="t" style="left:2450.0px;width:800px;text-align:center;top:1271.4px;font-size:24px;line-height:24px;color:#e6e6e6;">0.200</div>
<div class="t" style="left:2450.0px;width:800px;text-align:center;top:1310.4px;font-size:24px;line-height:24px;color:#e6e6e6;">0.100</div>
<div style="position:absolute;left:2937.0px;top:1225.6px;width:37.0px;height:36.4px;background:#282828;border-radius:7px;"></div>
<svg style="position:absolute;left:2946px;top:1234px;" width="20" height="20" viewBox="0 0 20 20"><circle cx="10" cy="10" r="5.5" stroke="#e6e6e6" stroke-width="2.2" fill="none"/></svg>
<div class="t" style="right:356.0px;top:1361.8px;font-size:24px;line-height:24px;color:#e6e6e6;text-align:right;letter-spacing:0px;">Subsurface C..</div>
<div style="position:absolute;left:2782.0px;top:1354.9px;width:192.0px;height:36.0px;background:#282828;border-radius:7px;"></div>
<div style="position:absolute;left:2782.0px;top:1354.9px;width:152.0px;height:36.0px;background:#ffffff;border-radius:7px 0 0 7pxpx;"></div>
<svg style="position:absolute;left:2946px;top:1362.9px;" width="20" height="20" viewBox="0 0 20 20"><circle cx="10" cy="10" r="5.5" stroke="#e6e6e6" stroke-width="2.2" fill="none"/></svg>
<div class="t" style="right:356.0px;top:1411.7px;font-size:24px;line-height:24px;color:#e6e6e6;text-align:right;letter-spacing:0px;">Metallic</div>
<div style="position:absolute;left:2782.0px;top:1404.8px;width:192.0px;height:36.0px;background:#282828;border-radius:7px;"></div>
<div style="position:absolute;left:2782.0px;top:1404.8px;width:152.0px;height:36.0px;background:#565656;border-radius:7px 0 0 7pxpx;"></div>
<div class="t" style="left:2458.0px;width:800px;text-align:center;top:1411.7px;font-size:24px;line-height:24px;color:#e6e6e6;">0.000</div>
<svg style="position:absolute;left:2946px;top:1412.8px;" width="20" height="20" viewBox="0 0 20 20"><circle cx="10" cy="10" r="5.5" stroke="#e6e6e6" stroke-width="2.2" fill="none"/></svg>
<div class="t" style="right:356.0px;top:1461.7px;font-size:24px;line-height:24px;color:#e6e6e6;text-align:right;letter-spacing:0px;">Specular</div>
<div style="position:absolute;left:2782.0px;top:1454.8px;width:192.0px;height:36.0px;background:#282828;border-radius:7px;"></div>
<div style="position:absolute;left:2782.0px;top:1454.8px;width:152.0px;height:36.0px;background:#565656;border-radius:7px 0 0 7pxpx;"></div>
<div class="t" style="left:2458.0px;width:800px;text-align:center;top:1461.7px;font-size:24px;line-height:24px;color:#e6e6e6;">0.000</div>
<svg style="position:absolute;left:2946px;top:1462.8px;" width="20" height="20" viewBox="0 0 20 20"><circle cx="10" cy="10" r="5.5" stroke="#e6e6e6" stroke-width="2.2" fill="none"/></svg>
<div class="t" style="right:356.0px;top:1511.6px;font-size:24px;line-height:24px;color:#e6e6e6;text-align:right;letter-spacing:0px;">Specular Tint</div>
<div style="position:absolute;left:2782.0px;top:1504.7px;width:192.0px;height:36.0px;background:#282828;border-radius:7px;"></div>
<div style="position:absolute;left:2782.0px;top:1504.7px;width:152.0px;height:36.0px;background:#565656;border-radius:7px 0 0 7pxpx;"></div>
<div class="t" style="left:2458.0px;width:800px;text-align:center;top:1511.6px;font-size:24px;line-height:24px;color:#e6e6e6;">0.000</div>
<svg style="position:absolute;left:2946px;top:1512.7px;" width="20" height="20" viewBox="0 0 20 20"><circle cx="10" cy="10" r="5.5" stroke="#e6e6e6" stroke-width="2.2" fill="none"/></svg>
<div class="t" style="right:356.0px;top:1561.6px;font-size:24px;line-height:24px;color:#e6e6e6;text-align:right;letter-spacing:0px;">Roughness</div>
<div style="position:absolute;left:2782.0px;top:1554.7px;width:192.0px;height:36.0px;background:#282828;border-radius:7px;"></div>
<div style="position:absolute;left:2782.0px;top:1554.7px;width:152.0px;height:36.0px;background:#565656;border-radius:7px 0 0 7pxpx;"></div>
<div class="t" style="left:2458.0px;width:800px;text-align:center;top:1561.6px;font-size:24px;line-height:24px;color:#e6e6e6;">0.000</div>
<svg style="position:absolute;left:2946px;top:1562.7px;" width="20" height="20" viewBox="0 0 20 20"><circle cx="10" cy="10" r="5.5" stroke="#e6e6e6" stroke-width="2.2" fill="none"/></svg>
<div style="position:absolute;left:2782.0px;top:1604.6px;width:192.0px;height:35.4px;background:#3a3a3a;border-radius:7px;"></div>
<div style="position:absolute;left:2782.0px;top:1604.6px;width:152.0px;height:35.4px;background:#565656;border-radius:7px 0 0 0px;"></div>
<div style="position:absolute;left:2552.0px;top:1609.0px;width:439.0px;height:6.0px;background:#1d1d1d;"></div>
<div style="position:absolute;left:112px;top:1615px;width:2880px;height:38px;background:#2b2b2b;border-radius:0 0 11px 11px;"></div>
<svg style="position:absolute;left:134px;top:1619px;" width="34" height="32" viewBox="0 0 34 32"><rect x="2" y="2" width="20" height="28" rx="7" stroke="#c8c8c8" stroke-width="2" fill="none"/><path d="M2 9 A7 7 0 0 1 9 2 H11 V13 H2Z" fill="#c8c8c8"/></svg>
<div class="t" style="left:180.0px;top:1622.4px;font-size:24px;line-height:24px;color:#c8c8c8;letter-spacing:0px;">Select</div>
<svg style="position:absolute;left:266px;top:1619px;" width="34" height="32" viewBox="0 0 34 32"><rect x="2" y="2" width="20" height="28" rx="7" stroke="#c8c8c8" stroke-width="2" fill="none"/><path d="M2 9 A7 7 0 0 1 9 2 H11 V13 H2Z" fill="#c8c8c8"/><path d="M26 1 C28 3 28 6 28 9 M31 5V15" stroke="#c8c8c8" stroke-width="1.6" fill="none"/></svg>
<div class="t" style="left:315.0px;top:1622.4px;font-size:24px;line-height:24px;color:#c8c8c8;letter-spacing:0px;">Box Select</div>
<svg style="position:absolute;left:674px;top:1619px;" width="34" height="32" viewBox="0 0 34 32"><rect x="2" y="2" width="20" height="28" rx="7" stroke="#c8c8c8" stroke-width="2" fill="none"/><rect x="10" y="6" width="4" height="9" rx="2" fill="#c8c8c8"/></svg>
<div class="t" style="left:720.0px;top:1622.4px;font-size:24px;line-height:24px;color:#c8c8c8;letter-spacing:0px;">Dolly View</div>
<svg style="position:absolute;left:1209px;top:1619px;" width="34" height="32" viewBox="0 0 34 32"><rect x="2" y="2" width="20" height="28" rx="7" stroke="#c8c8c8" stroke-width="2" fill="none"/><path d="M26 1 C28 3 28 6 28 9 M31 5V15" stroke="#c8c8c8" stroke-width="1.6" fill="none"/></svg>
<svg style="position:absolute;left:1209px;top:1619px;" width="34" height="32" viewBox="0 0 34 32"><path d="M13 2 H15 A7 7 0 0 1 22 9 V13 H13Z" fill="#c8c8c8"/></svg>
<div class="t" style="left:1259.0px;top:1622.4px;font-size:24px;line-height:24px;color:#c8c8c8;letter-spacing:0px;">Lasso Select</div>
<div class="t" style="right:174.4px;top:1621.9px;font-size:24px;line-height:24px;color:#bdbdbd;text-align:right;letter-spacing:0px;">Collection | Cube | Verts:8 | Faces:6 | Tris:12 | Objects:0/3 | Mem: 85.8 MiB | v2.82.7</div>
</body></html>
